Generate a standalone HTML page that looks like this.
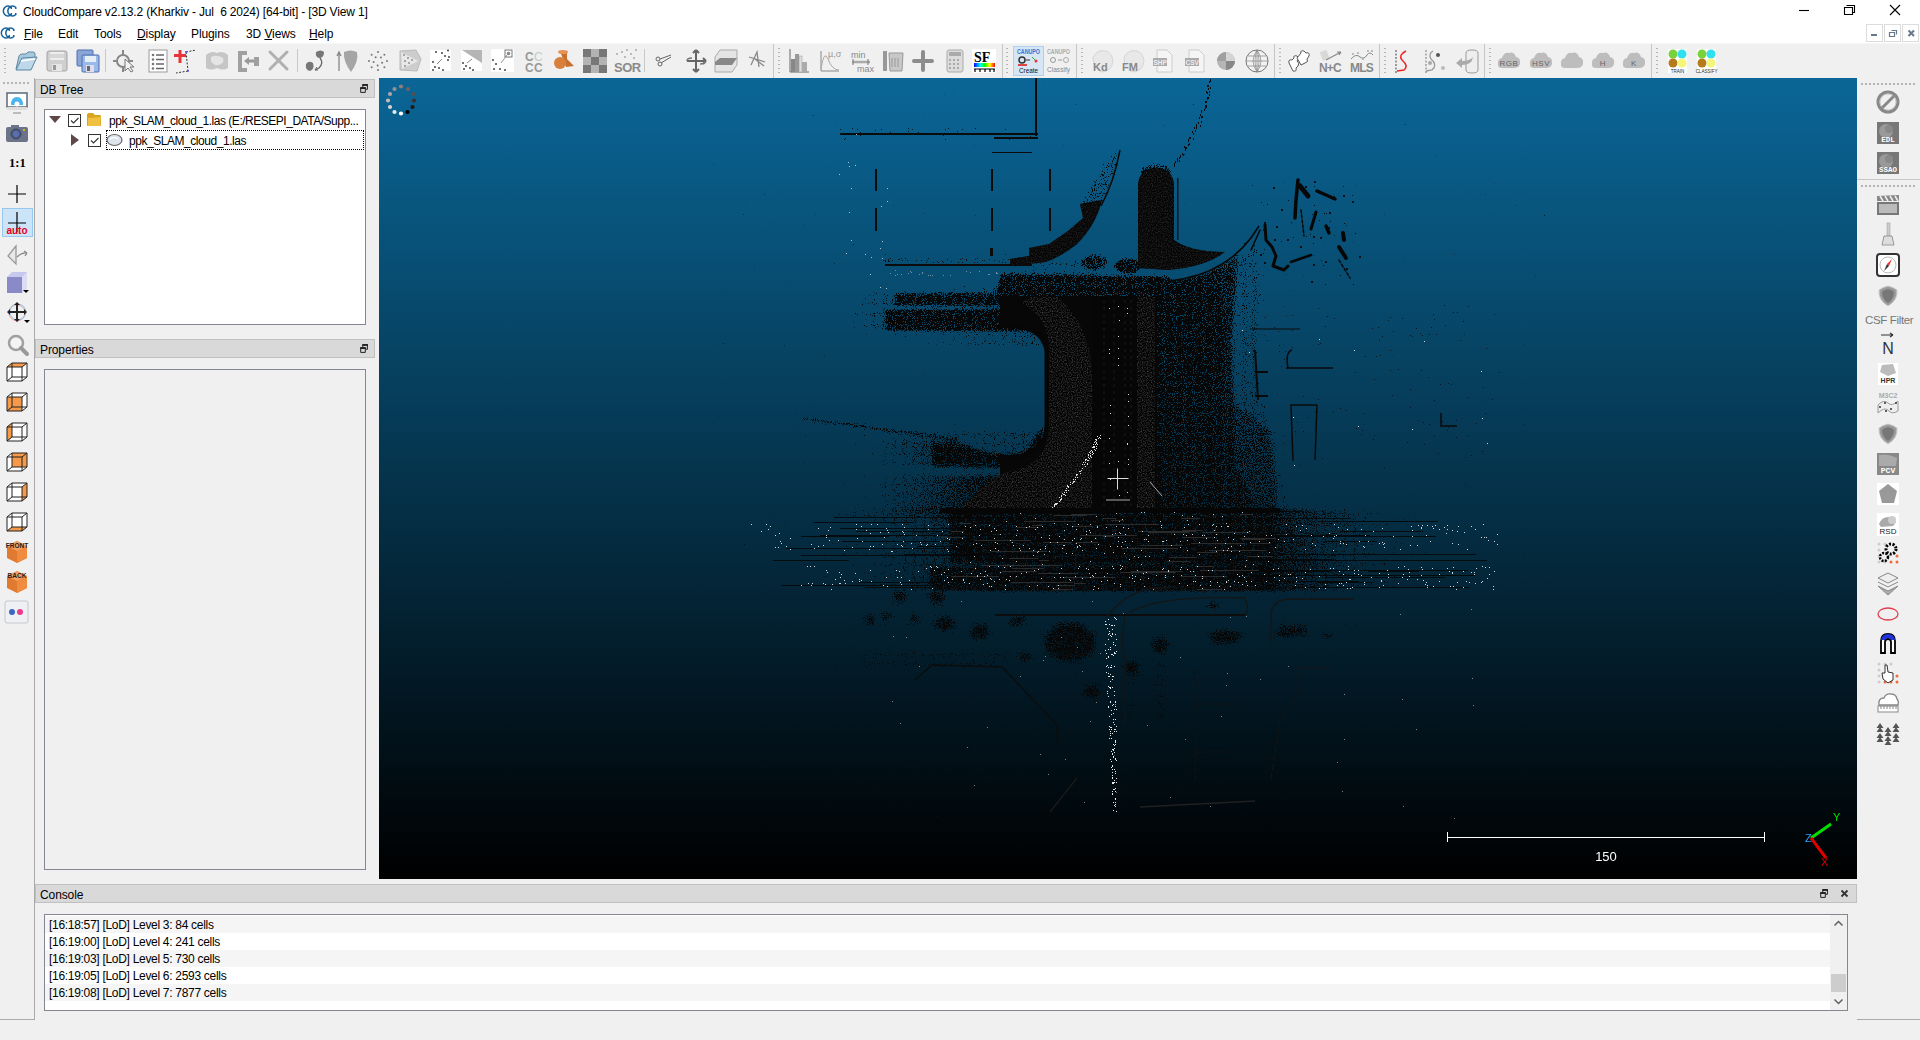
<!DOCTYPE html>
<html><head><meta charset="utf-8">
<style>
*{box-sizing:border-box;margin:0;padding:0}
html,body{width:1920px;height:1040px;overflow:hidden;background:#f0f0f0;font-family:"Liberation Sans",sans-serif;font-size:12px;color:#000}
.a{position:absolute}
.t{white-space:nowrap;line-height:14px}
svg{overflow:visible}
</style></head><body>
<div class="a" style="left:0;top:0;width:1920px;height:43px;background:#fff"></div>
<svg class="a" style="left:3px;top:5px" width="16" height="13" viewBox="0 0 16 13"><path d="M8.3,2.6 A4.6,5 0 1 0 8.3,9.4 M12.8,2.6 A4.6,5 0 1 0 12.8,9.4 M8.3,2.2v1.8 M12.8,2.2v1.8 M8.3,8v1.8 M12.8,8v1.8" fill="none" stroke="#14609a" stroke-width="1.5"/></svg>
<div class="a t" style="left:23px;top:5px;font-size:12px;color:#000;letter-spacing:-0.17px">CloudCompare v2.13.2 (Kharkiv - Jul&nbsp; 6 2024) [64-bit] - [3D View 1]</div>
<svg class="a" style="left:1794px;top:0px" width="20" height="20" viewBox="0 0 20 20"><path d="M5 10.5h10" stroke="#000" stroke-width="1.1"/></svg>
<svg class="a" style="left:1839px;top:0px" width="20" height="20" viewBox="0 0 20 20"><path d="M5.5 7.5h8v7h-8z" fill="none" stroke="#000" stroke-width="1.1"/><path d="M7.5 5.5h8v7h-2" fill="none" stroke="#000" stroke-width="1.1"/></svg>
<svg class="a" style="left:1885px;top:0px" width="20" height="20" viewBox="0 0 20 20"><path d="M5 5l10 10M15 5L5 15" stroke="#000" stroke-width="1.1"/></svg>
<svg class="a" style="left:1px;top:27px" width="16" height="13" viewBox="0 0 16 13"><path d="M8.3,2.6 A4.6,5 0 1 0 8.3,9.4 M12.8,2.6 A4.6,5 0 1 0 12.8,9.4 M8.3,2.2v1.8 M12.8,2.2v1.8 M8.3,8v1.8 M12.8,8v1.8" fill="none" stroke="#14609a" stroke-width="1.5"/></svg>
<div class="a t" style="left:24px;top:27px;font-size:12px;color:#000;letter-spacing:-0.1px"><u>F</u>ile</div>
<div class="a t" style="left:58px;top:27px;font-size:12px;color:#000;letter-spacing:-0.1px">Edit</div>
<div class="a t" style="left:94px;top:27px;font-size:12px;color:#000;letter-spacing:-0.1px">Tools</div>
<div class="a t" style="left:137px;top:27px;font-size:12px;color:#000;letter-spacing:-0.1px"><u>D</u>isplay</div>
<div class="a t" style="left:191px;top:27px;font-size:12px;color:#000;letter-spacing:-0.1px">Plugins</div>
<div class="a t" style="left:246px;top:27px;font-size:12px;color:#000;letter-spacing:-0.1px">3D <u>V</u>iews</div>
<div class="a t" style="left:309px;top:27px;font-size:12px;color:#000;letter-spacing:-0.1px"><u>H</u>elp</div>
<div class="a" style="left:1866px;top:24px;width:17px;height:18px;border:1px solid #dcdcdc;background:#fff"></div>
<div class="a" style="left:1884px;top:24px;width:17px;height:18px;border:1px solid #dcdcdc;background:#fff"></div>
<div class="a" style="left:1902px;top:24px;width:17px;height:18px;border:1px solid #dcdcdc;background:#fff"></div>
<svg class="a" style="left:1866px;top:24px" width="17" height="18" viewBox="0 0 17 18"><rect x="5" y="10" width="6" height="2" fill="#67788a"/></svg>
<svg class="a" style="left:1884px;top:24px" width="17" height="18" viewBox="0 0 17 18"><path d="M5.5 8.5h5v4h-5z M7.5 6.5h5v4" fill="none" stroke="#67788a" stroke-width="1.2"/></svg>
<svg class="a" style="left:1903px;top:24px" width="17" height="18" viewBox="0 0 17 18"><path d="M5.5 6.5l5.5 5.5M11 6.5l-5.5 5.5" stroke="#67788a" stroke-width="2"/></svg>
<div class="a" style="left:0;top:43px;width:1920px;height:1px;background:#f6f6f6"></div>
<div class="a" style="left:4px;top:48px;width:2px;height:25px;background:repeating-linear-gradient(to bottom,#b4b4b4 0 1px,transparent 1px 4px)"></div>
<div class="a" style="left:778px;top:48px;width:2px;height:25px;background:repeating-linear-gradient(to bottom,#b4b4b4 0 1px,transparent 1px 4px)"></div>
<div class="a" style="left:1006px;top:48px;width:2px;height:25px;background:repeating-linear-gradient(to bottom,#b4b4b4 0 1px,transparent 1px 4px)"></div>
<div class="a" style="left:1081px;top:48px;width:2px;height:25px;background:repeating-linear-gradient(to bottom,#b4b4b4 0 1px,transparent 1px 4px)"></div>
<div class="a" style="left:1279px;top:48px;width:2px;height:25px;background:repeating-linear-gradient(to bottom,#b4b4b4 0 1px,transparent 1px 4px)"></div>
<div class="a" style="left:1384px;top:48px;width:2px;height:25px;background:repeating-linear-gradient(to bottom,#b4b4b4 0 1px,transparent 1px 4px)"></div>
<div class="a" style="left:1489px;top:48px;width:2px;height:25px;background:repeating-linear-gradient(to bottom,#b4b4b4 0 1px,transparent 1px 4px)"></div>
<div class="a" style="left:1656px;top:48px;width:2px;height:25px;background:repeating-linear-gradient(to bottom,#b4b4b4 0 1px,transparent 1px 4px)"></div>
<div class="a" style="left:105px;top:49px;width:1px;height:23px;background:#c8c8c8"></div>
<div class="a" style="left:297px;top:49px;width:1px;height:23px;background:#c8c8c8"></div>
<div class="a" style="left:644px;top:49px;width:1px;height:23px;background:#c8c8c8"></div>
<div class="a" style="left:773px;top:44px;width:1px;height:34px;background:#c6c6c6"></div>
<div class="a" style="left:1002px;top:44px;width:1px;height:34px;background:#c6c6c6"></div>
<div class="a" style="left:1076px;top:44px;width:1px;height:34px;background:#c6c6c6"></div>
<div class="a" style="left:1274px;top:44px;width:1px;height:34px;background:#c6c6c6"></div>
<div class="a" style="left:1379px;top:44px;width:1px;height:34px;background:#c6c6c6"></div>
<div class="a" style="left:1484px;top:44px;width:1px;height:34px;background:#c6c6c6"></div>
<div class="a" style="left:1651px;top:44px;width:1px;height:34px;background:#c6c6c6"></div>
<div class="a" style="left:1013px;top:46px;width:31px;height:30px;background:#d6e6f4;border:1px solid #aed0ee"></div>
<svg class="a" style="left:13px;top:49px" width="24" height="24" viewBox="0 0 24 24"><path d="M3 20 L6 7 Q7 5 9 5 L13 5 15 3 20 3 Q22 3 22 5 L22 8 Z" fill="#a8c8dc" stroke="#5f8aa5"/><path d="M3 21 L9 9 L24 8 L18 21 Z" fill="#bcd8ea" stroke="#5a85a0"/><path d="M8 12 L22 10" stroke="#fff" stroke-width="1.5"/></svg>
<svg class="a" style="left:45px;top:49px" width="24" height="24" viewBox="0 0 24 24"><rect x="2" y="2" width="20" height="20" rx="2" fill="#cfcfcf" stroke="#a3a3a3"/><rect x="5" y="3" width="14" height="8" fill="#ededed"/><path d="M5 6h14M5 8h14" stroke="#c0c0c0"/><rect x="7" y="15" width="10" height="7" fill="#e6e6e6"/><rect x="8" y="16" width="3" height="5" fill="#999"/></svg>
<svg class="a" style="left:76px;top:49px" width="24" height="24" viewBox="0 0 24 24"><rect x="1" y="1" width="16" height="16" rx="1" fill="#8ba6d6" stroke="#4d6fb3"/><rect x="6" y="6" width="17" height="17" rx="1" fill="#9ab8e8" stroke="#4a6db0"/><rect x="9" y="7" width="11" height="6" fill="#e5edf5"/><rect x="10" y="16" width="8" height="7" fill="#dde"/><rect x="11" y="17" width="3" height="5" fill="#666"/></svg>
<svg class="a" style="left:112px;top:49px" width="24" height="24" viewBox="0 0 24 24"><circle cx="11" cy="12" r="6" fill="none" stroke="#888" stroke-width="2"/><path d="M1 12h4M17 12h4M11 1v5M11 18v5" stroke="#888" stroke-width="2"/><path d="M13 10 L13 22 L16 19 L19 23 L21 22 L18 18 L22 18 Z" fill="#f2f2f2" stroke="#777"/></svg>
<svg class="a" style="left:146px;top:49px" width="24" height="24" viewBox="0 0 24 24"><rect x="3" y="1" width="18" height="22" fill="#fff" stroke="#999"/><g fill="#777"><circle cx="7" cy="6" r="1.3"/><circle cx="7" cy="10.5" r="1.3"/><circle cx="7" cy="15" r="1.3"/><circle cx="7" cy="19.5" r="1.3"/></g><path d="M10 6h8M10 10.5h8M10 15h8M10 19.5h8" stroke="#666" stroke-width="1.3"/></svg>
<svg class="a" style="left:174px;top:49px" width="24" height="24" viewBox="0 0 24 24"><path d="M6 1v13M0 6.5h12" stroke="#e8333a" stroke-width="3"/><path d="M12 3 L22 1 M12 3 L14 22 M14 22 L2 24" stroke="#333" stroke-width="1" stroke-dasharray="2 1.5"/><circle cx="12" cy="3" r="1" fill="#55f"/><circle cx="14" cy="22" r="1" fill="#55f"/></svg>
<svg class="a" style="left:205px;top:49px" width="24" height="24" viewBox="0 0 24 24"><path d="M1 6 Q6 1 12 4 Q18 1 23 6 L23 19 Q18 22 12 19 Q6 22 1 19Z" fill="#c6c6c6"/><path d="M6 8 Q12 5 18 9 Q20 14 14 16 Q8 17 6 12Z" fill="#e5e5e5"/></svg>
<svg class="a" style="left:237px;top:49px" width="24" height="24" viewBox="0 0 24 24"><path d="M1 2h9v4H5v13h5v4H1z" fill="#a0a0a0"/><path d="M7 12 L12 8 L12 10.5 L17 10.5 L17 13.5 L12 13.5 L12 16Z" fill="#999"/><rect x="17" y="8" width="5" height="9" fill="#a0a0a0"/></svg>
<svg class="a" style="left:267px;top:49px" width="24" height="24" viewBox="0 0 24 24"><path d="M3 3 L20 20 M20 3 L3 20" stroke="#b0b0b0" stroke-width="3" stroke-linecap="round"/></svg>
<svg class="a" style="left:304px;top:49px" width="24" height="24" viewBox="0 0 24 24"><path d="M2 15 Q5 11 9 14 Q11 20 6 22 Q1 21 2 15Z" fill="#777"/><path d="M12 3 Q17 0 20 3 Q20 9 15 9 Q11 8 12 3Z" fill="#777"/><path d="M16 9 Q20 14 15 19 L11 21" fill="none" stroke="#666" stroke-width="1.3"/><path d="M11 21 L13 18 M11 21 L14 21" stroke="#666"/></svg>
<svg class="a" style="left:336px;top:49px" width="24" height="24" viewBox="0 0 24 24"><path d="M3 22V4M1 7L3 3L5 7" stroke="#888" stroke-width="1.3" fill="none"/><path d="M8 3 Q14 0 21 3 Q23 12 15 23 Q7 12 8 3Z" fill="#a5a5a5"/></svg>
<svg class="a" style="left:366px;top:49px" width="24" height="24" viewBox="0 0 24 24"><g fill="#777"><circle cx="21.0" cy="12.0" r="1"/><circle cx="18.364108439930344" cy="18.363813618012973" r="1"/><circle cx="12.000416941153919" cy="20.999999990342225" r="1"/><circle cx="5.636481217562238" cy="18.364403248189245" r="1"/><circle cx="3.0000000386310948" cy="12.000833882306944" r="1"/><circle cx="5.6353019572109595" cy="5.636776066794651" r="1"/><circle cx="11.998749176541818" cy="3.000000086919963" r="1"/><circle cx="18.362929070316362" cy="5.635007176270896" r="1"/><circle cx="16.144774473012983" cy="13.752382540388927" r="1"/><circle cx="11.61435707858034" cy="16.483445052318466" r="1"/><circle cx="7.616857908279282" cy="13.01885494737285" r="1"/><circle cx="9.676403143298202" cy="8.146313758552012" r="1"/><circle cx="14.946916457058906" cy="8.599164309303465" r="1"/></g></svg>
<svg class="a" style="left:399px;top:49px" width="24" height="24" viewBox="0 0 24 24"><path d="M1 2 L17 1 L22 10 L18 22 L1 21Z" fill="#cdcdcd" stroke="#bbb"/><path d="M2 3 L19 12 L3 20Z" fill="#e8e8e8"/><g fill="#555"><circle cx="5" cy="6" r="0.8"/><circle cx="9" cy="9" r="0.8"/><circle cx="13" cy="11" r="0.8"/><circle cx="6" cy="12" r="0.8"/><circle cx="10" cy="14" r="0.8"/><circle cx="6" cy="17" r="0.8"/></g></svg>
<svg class="a" style="left:430px;top:49px" width="24" height="24" viewBox="0 0 24 24"><rect x="0" y="1" width="21" height="21" fill="#fff"/><g fill="#444"><circle cx="6" cy="3" r="1"/><circle cx="12" cy="4" r="1"/><circle cx="18" cy="1.5" r="1"/><circle cx="15" cy="7" r="1"/><circle cx="19" cy="8" r="1"/><circle cx="3" cy="13" r="1"/><circle cx="5" cy="18" r="1"/><circle cx="9" cy="19" r="1"/><circle cx="3" cy="21" r="1"/><circle cx="13" cy="21" r="1"/><circle cx="18" cy="11" r="1"/></g><path d="M7 15L12 10" stroke="#888"/></svg>
<svg class="a" style="left:461px;top:49px" width="24" height="24" viewBox="0 0 24 24"><rect x="0" y="1" width="21" height="21" fill="#fff"/><path d="M1 1 L21 1 L21 14Z" fill="#b5b5b5"/><g fill="#444"><circle cx="2" cy="14" r="1"/><circle cx="5" cy="17" r="1"/><circle cx="9" cy="19" r="1"/><circle cx="3" cy="20" r="1"/><circle cx="12" cy="21" r="1"/></g><path d="M6 14L11 10" stroke="#888"/></svg>
<svg class="a" style="left:491px;top:49px" width="24" height="24" viewBox="0 0 24 24"><rect x="0" y="0" width="23" height="23" fill="#fff"/><g fill="#444"><circle cx="2" cy="11" r="1"/><circle cx="5" cy="15" r="1"/><circle cx="3" cy="20" r="1"/><circle cx="9" cy="20" r="1"/><circle cx="14" cy="21" r="1"/></g><path d="M10 14L16 6" stroke="#999"/><rect x="14" y="1" width="7" height="7" fill="none" stroke="#777"/><circle cx="17.5" cy="4.5" r="1.8" fill="#888"/></svg>
<svg class="a" style="left:525px;top:50px" width="24" height="24" viewBox="0 0 24 24"><text x="0" y="11" font-family="Liberation Sans" font-weight="bold" font-size="12" fill="#999">C</text><text x="9" y="11" font-family="Liberation Sans" font-size="12" fill="#c8c8c8">C</text><text x="0" y="22" font-family="Liberation Sans" font-weight="bold" font-size="12" fill="#999">C</text><text x="9" y="22" font-family="Liberation Sans" font-weight="bold" font-size="12" fill="#999">C</text></svg>
<svg class="a" style="left:552px;top:49px" width="24" height="24" viewBox="0 0 24 24"><path d="M8 2 Q14 1 15 4 L15 10 L22 17 L14 18 Z" fill="#c96f2e"/><circle cx="8" cy="14" r="6" fill="#d97f3c"/><ellipse cx="11" cy="3" rx="5" ry="2" fill="#e89155"/></svg>
<svg class="a" style="left:583px;top:49px" width="24" height="24" viewBox="0 0 24 24"><rect x="0" y="0" width="24" height="24" fill="#b3b3b3"/><g fill="#777"><rect x="0" y="0" width="8" height="8"/><rect x="16" y="0" width="8" height="8"/><rect x="8" y="8" width="8" height="8"/><rect x="0" y="16" width="8" height="8"/><rect x="16" y="16" width="8" height="8"/></g></svg>
<svg class="a" style="left:614px;top:49px" width="24" height="24" viewBox="0 0 24 24"><text x="0" y="23" font-family="Liberation Sans" font-weight="bold" font-size="13" fill="#8a8a8a" letter-spacing="-0.5">SOR</text><g fill="#aaa"><circle cx="3" cy="5" r="1"/><circle cx="8" cy="3" r="1"/><circle cx="13" cy="1" r="1"/><circle cx="17" cy="5" r="1"/><circle cx="22" cy="1" r="1"/><circle cx="11" cy="8" r="1"/><circle cx="20" cy="9" r="1"/></g></svg>
<svg class="a" style="left:655px;top:49px" width="24" height="24" viewBox="0 0 24 24"><circle cx="3" cy="10" r="2" fill="none" stroke="#666"/><circle cx="5" cy="15" r="2" fill="none" stroke="#666"/><path d="M5 10 L16 6 M6 14 L16 8" stroke="#666"/></svg>
<svg class="a" style="left:684px;top:49px" width="24" height="24" viewBox="0 0 24 24"><path d="M12 1v22M3 12h19M12 1l-3 3M12 1l3 3M12 23l-3-3M12 23l3-3M22 12l-3-3M22 12l-3 3" stroke="#666" stroke-width="2" fill="none"/><path d="M3 12 Q3 9 8 9M16 15 Q21 15 21 12" stroke="#777" fill="none" stroke-width="1.5"/></svg>
<svg class="a" style="left:714px;top:49px" width="24" height="24" viewBox="0 0 24 24"><path d="M1 8 L6 1 L23 1 L23 16 L18 23 L1 23Z" fill="#e4e4e4" stroke="#aaa"/><path d="M1 13 L6 9 L23 9 L18 16 L1 16Z" fill="#888"/></svg>
<svg class="a" style="left:747px;top:49px" width="24" height="24" viewBox="0 0 24 24"><path d="M4 16 L10 3 L12 18 M2 8 L18 13 M8 10 L17 17" stroke="#888" stroke-width="1.3" fill="none"/></svg>
<svg class="a" style="left:789px;top:49px" width="24" height="24" viewBox="0 0 24 24"><path d="M1 0 V23 H20" stroke="#666" fill="none"/><rect x="2" y="10" width="4" height="13" fill="#888"/><rect x="6" y="5" width="4" height="18" fill="#999"/><rect x="10" y="7" width="3" height="16" fill="#ddd" stroke="#999" stroke-width="0.5"/><rect x="13" y="13" width="5" height="10" fill="#aaa"/></svg>
<svg class="a" style="left:820px;top:49px" width="24" height="24" viewBox="0 0 24 24"><path d="M1 2 V22 H19" stroke="#888" fill="none"/><path d="M1 20 Q4 0 8 10 Q12 21 19 21" stroke="#aaa" fill="none"/><text x="8" y="8" font-family="Liberation Sans" font-size="9" fill="#999">µ,σ</text></svg>
<svg class="a" style="left:851px;top:49px" width="24" height="24" viewBox="0 0 24 24"><text x="0" y="9" font-family="Liberation Sans" font-size="9" fill="#888">min</text><text x="6" y="23" font-family="Liberation Sans" font-size="9" fill="#888">max</text><path d="M1 13h18" stroke="#aaa" stroke-width="2.5"/><path d="M2 10v6M17 10v6" stroke="#777"/></svg>
<svg class="a" style="left:883px;top:49px" width="24" height="24" viewBox="0 0 24 24"><rect x="0" y="2" width="4" height="20" fill="#999"/><path d="M6 4h14l-1 18h-12z" fill="#c8c8c8" stroke="#999"/><path d="M9 9v9M12 9v9M15 9v9" stroke="#999"/></svg>
<svg class="a" style="left:911px;top:49px" width="24" height="24" viewBox="0 0 24 24"><path d="M12 3v18M3 12h18" stroke="#8d8d8d" stroke-width="4" stroke-linecap="round"/></svg>
<svg class="a" style="left:944px;top:49px" width="24" height="24" viewBox="0 0 24 24"><rect x="3" y="1" width="16" height="22" rx="2" fill="#dcdcdc" stroke="#aaa"/><rect x="5" y="3" width="12" height="4" fill="#aaa"/><g fill="#aaa"><rect x="5" y="10" width="2" height="2"/><rect x="5" y="14" width="2" height="2"/><rect x="5" y="18" width="2" height="2"/><rect x="9" y="10" width="2" height="2"/><rect x="9" y="14" width="2" height="2"/><rect x="9" y="18" width="2" height="2"/><rect x="13" y="10" width="2" height="2"/><rect x="13" y="14" width="2" height="2"/><rect x="13" y="18" width="2" height="2"/></g></svg>
<svg class="a" style="left:972px;top:49px" width="24" height="24" viewBox="0 0 24 24"><rect x="0" y="0" width="24" height="24" fill="#fff"/><text x="2" y="13" font-family="Liberation Serif" font-weight="bold" font-size="14" fill="#000">SF</text><defs><linearGradient id="rb"><stop offset="0" stop-color="#00f"/><stop offset=".3" stop-color="#0ff"/><stop offset=".5" stop-color="#0f0"/><stop offset=".75" stop-color="#ff0"/><stop offset="1" stop-color="#f00"/></linearGradient></defs><rect x="2" y="14" width="21" height="4" fill="url(#rb)"/><path d="M2 20h21M3 20v3M8 20v3M13 20v3M18 20v3M22 20v3" stroke="#000" stroke-width="1.2"/></svg>
<svg class="a" style="left:1013px;top:47px" width="30" height="28" viewBox="0 0 30 28"><text x="4" y="7" font-family="Liberation Sans" font-weight="bold" font-size="6.5" fill="#3e6fd0" textLength="23" lengthAdjust="spacingAndGlyphs">CANUPO</text><circle cx="9" cy="13" r="3" fill="none" stroke="#333" stroke-width="1.5"/><path d="M13 13h4" stroke="#333"/><path d="M19 10l4 4" stroke="#3a3"/><circle cx="23" cy="14" r="1.5" fill="#e33"/><rect x="5" y="17" width="9" height="2" fill="#d44"/><text x="6" y="26" font-family="Liberation Sans" font-size="8" fill="#111" textLength="19" lengthAdjust="spacingAndGlyphs">Create</text></svg>
<svg class="a" style="left:1046px;top:47px" width="30" height="28" viewBox="0 0 30 28"><text x="1" y="7" font-family="Liberation Sans" font-weight="bold" font-size="6.5" fill="#aaa" textLength="23" lengthAdjust="spacingAndGlyphs">CANUPO</text><circle cx="7" cy="13" r="2.5" fill="none" stroke="#999"/><path d="M12 13h4" stroke="#999"/><circle cx="20" cy="13" r="2.5" fill="none" stroke="#aaa"/><text x="1" y="25" font-family="Liberation Sans" font-size="8" fill="#888" textLength="23" lengthAdjust="spacingAndGlyphs">Classify</text></svg>
<svg class="a" style="left:1090px;top:49px" width="24" height="24" viewBox="0 0 24 24"><path d="M3 8 Q8 0 16 2 Q22 4 23 12 Q22 22 12 23 Q3 20 3 8Z" fill="#e8e8e8" stroke="#d5d5d5"/><text x="3" y="22" font-family="Liberation Sans" font-weight="bold" font-size="11" fill="#888">Kd</text></svg>
<svg class="a" style="left:1121px;top:49px" width="24" height="24" viewBox="0 0 24 24"><path d="M3 8 Q8 0 16 2 Q22 4 23 12 Q22 22 12 23 Q3 20 3 8Z" fill="#e8e8e8" stroke="#d5d5d5"/><text x="1" y="22" font-family="Liberation Sans" font-weight="bold" font-size="11" fill="#888">FM</text></svg>
<svg class="a" style="left:1152px;top:49px" width="24" height="24" viewBox="0 0 24 24"><path d="M5 1h10l5 5v17H5z" fill="#f5f5f5" stroke="#ccc"/><rect x="1" y="9" width="14" height="8" fill="#aaa"/><text x="1.5" y="16" font-family="Liberation Sans" font-weight="bold" font-size="6.5" fill="#eee">SHP</text></svg>
<svg class="a" style="left:1184px;top:49px" width="24" height="24" viewBox="0 0 24 24"><path d="M5 1h10l5 5v17H5z" fill="#f5f5f5" stroke="#ccc"/><rect x="1" y="9" width="14" height="8" fill="#aaa"/><text x="1.5" y="16" font-family="Liberation Sans" font-weight="bold" font-size="6.5" fill="#eee">CSV</text></svg>
<svg class="a" style="left:1214px;top:49px" width="24" height="24" viewBox="0 0 24 24"><circle cx="12" cy="12" r="9" fill="#b5b5b5"/><path d="M12 12 L12 3 A9 9 0 0 1 21 12Z" fill="#d5d5d5"/><path d="M12 12 L21 12 A9 9 0 0 1 12 21Z" fill="#888"/><path d="M12 12 L3 12 A9 9 0 0 1 12 3Z" fill="#a0a0a0"/></svg>
<svg class="a" style="left:1245px;top:49px" width="24" height="24" viewBox="0 0 24 24"><circle cx="12" cy="12" r="11" fill="#f2f2f2" stroke="#777"/><path d="M12 1v22M1 12h22M3 7h18M3 17h18M12 1 Q4 12 12 23 M12 1 Q20 12 12 23 M12 1 Q8 12 12 23 M12 1 Q16 12 12 23" stroke="#888" fill="none" stroke-width="0.7"/></svg>
<svg class="a" style="left:1287px;top:49px" width="24" height="24" viewBox="0 0 24 24"><path d="M2 14 Q1 10 5 11 L7 9 Q6 6 10 7 L12 9 L10 12 Q13 14 11 17 L9 19 Q10 23 6 22 Z" fill="#fff" stroke="#555"/><path d="M10 9 L14 4 Q13 1 17 2 L19 4 Q23 3 22 7 L20 10 Q22 13 18 14 L14 16 Z" fill="#fff" stroke="#555"/></svg>
<svg class="a" style="left:1319px;top:49px" width="24" height="24" viewBox="0 0 24 24"><text x="0" y="23" font-family="Liberation Sans" font-weight="bold" font-size="12" fill="#888" letter-spacing="-0.8">N+C</text><rect x="2" y="2" width="7" height="9" fill="#d8d8d8" transform="rotate(-20 5 6)"/><path d="M7 11 L22 3 M22 3 L18 3 M22 3 L20 6" stroke="#888" stroke-width="1.2" fill="none"/></svg>
<svg class="a" style="left:1350px;top:49px" width="24" height="24" viewBox="0 0 24 24"><text x="0" y="23" font-family="Liberation Sans" font-weight="bold" font-size="12" fill="#888" letter-spacing="-0.8">MLS</text><path d="M1 10 Q6 4 10 8 Q14 11 17 6 Q20 2 23 6" stroke="#888" fill="none"/><g fill="#aaa"><circle cx="3" cy="5" r="1"/><circle cx="8" cy="4" r="1"/><circle cx="13" cy="10" r="1"/><circle cx="18" cy="2" r="1"/><circle cx="22" cy="2" r="1"/></g></svg>
<svg class="a" style="left:1394px;top:49px" width="24" height="24" viewBox="0 0 24 24"><path d="M2 1v23" stroke="#444" stroke-dasharray="2 1.5"/><path d="M12 2 Q4 6 8 11 Q15 17 10 21 L3 22" stroke="#e22" stroke-width="1.5" fill="none"/></svg>
<svg class="a" style="left:1425px;top:49px" width="24" height="24" viewBox="0 0 24 24"><path d="M1 1v23" stroke="#777" stroke-dasharray="2 1.5"/><path d="M8 2 Q3 5 6 10 Q13 16 7 21 L1 22" stroke="#999" stroke-width="1.3" fill="none"/><circle cx="13" cy="6" r="2" fill="#555"/><circle cx="5" cy="14" r="2" fill="#aaa"/><circle cx="18" cy="19" r="2" fill="#bbb"/></svg>
<svg class="a" style="left:1456px;top:49px" width="24" height="24" viewBox="0 0 24 24"><path d="M10 4 Q10 1 16 1 Q22 1 22 4 L22 21 Q22 24 16 24 Q10 24 10 21Z" fill="#eee" stroke="#999"/><path d="M0 14 L6 9 L6 12 Q14 12 17 8 Q16 16 6 16 L6 19Z" fill="#aaa"/></svg>
<svg class="a" style="left:1497px;top:49px" width="24" height="24" viewBox="0 0 24 24"><path d="M1 16 Q0 10 5 9 Q7 3 12 4 Q17 2 19 8 Q24 9 23 15 Q22 19 17 19 L5 19 Q1 19 1 16Z" fill="#bdbdbd"/><text x="12" y="17" text-anchor="middle" font-family="Liberation Sans" font-size="8" fill="#666" letter-spacing="0.5">RGB</text></svg>
<svg class="a" style="left:1529px;top:49px" width="24" height="24" viewBox="0 0 24 24"><path d="M1 16 Q0 10 5 9 Q7 3 12 4 Q17 2 19 8 Q24 9 23 15 Q22 19 17 19 L5 19 Q1 19 1 16Z" fill="#bdbdbd"/><text x="12" y="17" text-anchor="middle" font-family="Liberation Sans" font-size="8" fill="#666" letter-spacing="0.5">HSV</text></svg>
<svg class="a" style="left:1560px;top:49px" width="24" height="24" viewBox="0 0 24 24"><path d="M1 16 Q0 10 5 9 Q7 3 12 4 Q17 2 19 8 Q24 9 23 15 Q22 19 17 19 L5 19 Q1 19 1 16Z" fill="#bdbdbd"/><text x="12" y="17" text-anchor="middle" font-family="Liberation Sans" font-size="8" fill="#666" letter-spacing="0.5"></text></svg>
<svg class="a" style="left:1591px;top:49px" width="24" height="24" viewBox="0 0 24 24"><path d="M1 16 Q0 10 5 9 Q7 3 12 4 Q17 2 19 8 Q24 9 23 15 Q22 19 17 19 L5 19 Q1 19 1 16Z" fill="#bdbdbd"/><text x="12" y="17" text-anchor="middle" font-family="Liberation Sans" font-size="8" fill="#666" letter-spacing="0.5">H</text></svg>
<svg class="a" style="left:1622px;top:49px" width="24" height="24" viewBox="0 0 24 24"><path d="M1 16 Q0 10 5 9 Q7 3 12 4 Q17 2 19 8 Q24 9 23 15 Q22 19 17 19 L5 19 Q1 19 1 16Z" fill="#bdbdbd"/><text x="12" y="17" text-anchor="middle" font-family="Liberation Sans" font-size="8" fill="#666" letter-spacing="0.5">K</text></svg>
<svg class="a" style="left:1668px;top:49px" width="24" height="24" viewBox="0 0 24 24"><rect x="0" y="0" width="19" height="24" fill="#fff"/><circle cx="5" cy="5" r="4.5" fill="#7ad23a"/><circle cx="14" cy="5" r="4.5" fill="#2ee0f0"/><circle cx="5" cy="14" r="4.5" fill="#b47a1c"/><circle cx="14" cy="14" r="4.5" fill="#f5f57a"/><text x="9.5" y="23.5" text-anchor="middle" font-family="Liberation Sans" font-size="4.5" fill="#222">TRAIN</text></svg>
<svg class="a" style="left:1697px;top:49px" width="24" height="24" viewBox="0 0 24 24"><rect x="0" y="0" width="19" height="24" fill="#fff"/><circle cx="5" cy="5" r="4.5" fill="#7ad23a"/><circle cx="14" cy="5" r="4.5" fill="#2ee0f0"/><circle cx="5" cy="14" r="4.5" fill="#b47a1c"/><circle cx="14" cy="14" r="4.5" fill="#f5f57a"/><text x="9.5" y="23.5" text-anchor="middle" font-family="Liberation Sans" font-size="4.5" fill="#222">CLASSIFY</text></svg>
<div class="a" style="left:34px;top:78px;width:1px;height:942px;background:#a9a9a9"></div>
<div class="a" style="left:0px;top:1019px;width:35px;height:1px;background:#a9a9a9"></div>
<div class="a" style="left:3px;top:82px;width:28px;height:2px;background:repeating-linear-gradient(to right,#b4b4b4 0 2px,transparent 2px 4px)"></div>
<div class="a" style="left:2px;top:208px;width:31px;height:29px;background:#cce4f7;border:1px solid #99c8ee"></div>
<svg class="a" style="left:5px;top:209px" width="24" height="28" viewBox="0 0 24 28"><path d="M12 3v20M3 14h18" stroke="#000" stroke-width="1.2"/><text x="12" y="25" text-anchor="middle" font-family="Liberation Sans" font-weight="bold" font-size="10" fill="#e8001c">auto</text></svg>
<svg class="a" style="left:5px;top:92px" width="25" height="25" viewBox="0 0 25 25"><rect x="2" y="1" width="20" height="14" fill="#fff" stroke="#5a6a7a" stroke-width="1.5"/><path d="M6 13 Q6 5 12 5 Q18 5 18 13Z" fill="#4ab4ec"/><circle cx="12" cy="12" r="2.5" fill="#fff"/><rect x="2" y="15" width="20" height="3" fill="#ddd"/><path d="M8 21h8" stroke="#bbb" stroke-width="2"/></svg>
<svg class="a" style="left:5px;top:122px" width="25" height="25" viewBox="0 0 25 25"><rect x="1" y="5" width="22" height="15" rx="2" fill="#6a7388"/><rect x="6" y="3" width="8" height="4" fill="#6a7388"/><circle cx="11" cy="12" r="5" fill="#4d5a7a" stroke="#3a4560"/><circle cx="11" cy="12" r="3" fill="#5a6fb0"/><circle cx="19" cy="8" r="1" fill="#ec0"/></svg>
<svg class="a" style="left:5px;top:151px" width="25" height="25" viewBox="0 0 25 25"><text x="4" y="16" font-family="Liberation Serif" font-weight="bold" font-size="12.5" fill="#000">1:1</text></svg>
<svg class="a" style="left:5px;top:182px" width="25" height="25" viewBox="0 0 25 25"><path d="M12 3v18M3 12h18" stroke="#000" stroke-width="1.2"/></svg>
<svg class="a" style="left:5px;top:243px" width="25" height="25" viewBox="0 0 25 25"><path d="M11 3 L3 13 L11 21Z" fill="#e8e8e8" stroke="#999" stroke-width="1.3"/><path d="M12 14 Q17 9 22 10 M22 10 L19 8 M22 10 L20 13" stroke="#888" stroke-width="1.3" fill="none"/></svg>
<svg class="a" style="left:5px;top:271px" width="25" height="25" viewBox="0 0 25 25"><path d="M2 6 L7 1 L22 1 L22 17 L17 22 L2 22Z" fill="#c8c8ee"/><path d="M2 6 L17 6 L17 22 L2 22Z" fill="#8a8ac8"/><path d="M17 6 L22 1 L22 17 L17 22Z" fill="#dcdcf5"/><path d="M18 19h6l-3 3z" fill="#000"/></svg>
<svg class="a" style="left:6px;top:301px" width="25" height="25" viewBox="0 0 25 25"><circle cx="11" cy="11" r="8" fill="none" stroke="#9d9" stroke-width="0.8"/><circle cx="11" cy="12" r="8" fill="none" stroke="#f99" stroke-width="0.8"/><circle cx="12" cy="11" r="8" fill="none" stroke="#9bf" stroke-width="0.8"/><path d="M11 2v18M2 11h18" stroke="#222" stroke-width="2"/><path d="M11 1l-3 3h6zM11 21l-3-3h6zM1 11l3-3v6zM21 11l-3-3v6z" fill="#222"/><path d="M18 19h6l-3 3z" fill="#000"/></svg>
<svg class="a" style="left:6px;top:333px" width="25" height="25" viewBox="0 0 25 25"><circle cx="10" cy="10" r="7" fill="#f4f4f4" stroke="#a0a0a0" stroke-width="2.5"/><path d="M15 15 L21 21" stroke="#999" stroke-width="4" stroke-linecap="round"/></svg>
<svg class="a" style="left:5px;top:361px" width="25" height="25" viewBox="0 0 25 25"><path d="M2 6 L7 2 L22 2 L22 16 L17 20 L2 20Z" fill="#fff"/><path d="M2 6 L7 2 L22 2 L17 6Z" fill="#f59a4a"/><path d="M2 6 L7 2 L22 2 L22 16 L17 20 L2 20Z M2 6h15v14 M17 6 L22 2 M7 2v14h15 M7 16 L2 20" fill="none" stroke="#222" stroke-width="1"/></svg>
<svg class="a" style="left:5px;top:391px" width="25" height="25" viewBox="0 0 25 25"><path d="M2 6 L7 2 L22 2 L22 16 L17 20 L2 20Z" fill="#fff"/><path d="M2 6 L17 6 L17 20 L2 20Z" fill="#f59a4a"/><path d="M2 6 L7 2 L22 2 L22 16 L17 20 L2 20Z M2 6h15v14 M17 6 L22 2 M7 2v14h15 M7 16 L2 20" fill="none" stroke="#222" stroke-width="1"/></svg>
<svg class="a" style="left:5px;top:421px" width="25" height="25" viewBox="0 0 25 25"><path d="M2 6 L7 2 L22 2 L22 16 L17 20 L2 20Z" fill="#fff"/><path d="M2 6 L7 2 L7 16 L2 20Z" fill="#f59a4a"/><path d="M2 6 L7 2 L22 2 L22 16 L17 20 L2 20Z M2 6h15v14 M17 6 L22 2 M7 2v14h15 M7 16 L2 20" fill="none" stroke="#222" stroke-width="1"/></svg>
<svg class="a" style="left:5px;top:451px" width="25" height="25" viewBox="0 0 25 25"><path d="M2 6 L7 2 L22 2 L22 16 L17 20 L2 20Z" fill="#fff"/><path d="M7 2 L22 2 L22 16 L7 16Z" fill="#f59a4a"/><path d="M2 6 L7 2 L22 2 L22 16 L17 20 L2 20Z M2 6h15v14 M17 6 L22 2 M7 2v14h15 M7 16 L2 20" fill="none" stroke="#222" stroke-width="1"/></svg>
<svg class="a" style="left:5px;top:481px" width="25" height="25" viewBox="0 0 25 25"><path d="M2 6 L7 2 L22 2 L22 16 L17 20 L2 20Z" fill="#fff"/><path d="M17 6 L22 2 L22 16 L17 20Z" fill="#f59a4a"/><path d="M2 6 L7 2 L22 2 L22 16 L17 20 L2 20Z M2 6h15v14 M17 6 L22 2 M7 2v14h15 M7 16 L2 20" fill="none" stroke="#222" stroke-width="1"/></svg>
<svg class="a" style="left:5px;top:511px" width="25" height="25" viewBox="0 0 25 25"><path d="M2 6 L7 2 L22 2 L22 16 L17 20 L2 20Z" fill="#fff"/><path d="M2 20 L7 16 L22 16 L17 20Z" fill="#f59a4a"/><path d="M2 6 L7 2 L22 2 L22 16 L17 20 L2 20Z M2 6h15v14 M17 6 L22 2 M7 2v14h15 M7 16 L2 20" fill="none" stroke="#222" stroke-width="1"/></svg>
<svg class="a" style="left:5px;top:539px" width="25" height="25" viewBox="0 0 25 25"><path d="M12 2 L22 7 L22 19 L12 24 L2 19 L2 7Z" fill="#e07a30"/><path d="M12 12 L22 7 L22 19 L12 24Z" fill="#f08c40"/><path d="M2 7 L12 2 L22 7 L12 12Z" fill="#f5a060"/><text x="12" y="9" text-anchor="middle" font-family="Liberation Sans" font-weight="bold" font-size="6.5" fill="#222">FRONT</text></svg>
<svg class="a" style="left:5px;top:569px" width="25" height="25" viewBox="0 0 25 25"><path d="M12 2 L22 7 L22 19 L12 24 L2 19 L2 7Z" fill="#e07a30"/><path d="M12 12 L22 7 L22 19 L12 24Z" fill="#f08c40"/><path d="M2 7 L12 2 L22 7 L12 12Z" fill="#f5a060"/><text x="12" y="9" text-anchor="middle" font-family="Liberation Sans" font-weight="bold" font-size="6.5" fill="#222">BACK</text></svg>
<svg class="a" style="left:4px;top:600px" width="25" height="25" viewBox="0 0 25 25"><rect x="1" y="1" width="23" height="22" rx="2" fill="#eef0f4" stroke="#c4c8d0"/><circle cx="8" cy="12" r="3" fill="#3d66c0"/><circle cx="16" cy="12" r="3" fill="#e83c8c"/></svg>
<div class="a" style="left:1857px;top:1019px;width:63px;height:1px;background:#a9a9a9"></div>
<div class="a" style="left:1861px;top:83px;width:56px;height:2px;background:repeating-linear-gradient(to right,#b4b4b4 0 2px,transparent 2px 4px)"></div>
<div class="a" style="left:1861px;top:185px;width:56px;height:2px;background:repeating-linear-gradient(to right,#b4b4b4 0 2px,transparent 2px 4px)"></div>
<div class="a" style="left:1857px;top:179px;width:63px;height:1px;background:#c8c8c8"></div>
<svg class="a" style="left:1876px;top:90px" width="25" height="25" viewBox="0 0 25 25"><circle cx="12" cy="12" r="10" fill="none" stroke="#888" stroke-width="3"/><path d="M5 19 L19 5" stroke="#888" stroke-width="3"/><circle cx="12" cy="12" r="8" fill="none" stroke="#aaa" stroke-width="0.6"/></svg>
<svg class="a" style="left:1876px;top:121px" width="25" height="25" viewBox="0 0 25 25"><rect x="1" y="1" width="22" height="22" fill="#777"/><circle cx="10" cy="10" r="7" fill="#999"/><circle cx="13" cy="8" r="4" fill="#888"/><text x="12" y="21" text-anchor="middle" font-family="Liberation Mono" font-weight="bold" font-size="7.5" fill="#fff">EDL</text></svg>
<svg class="a" style="left:1876px;top:151px" width="25" height="25" viewBox="0 0 25 25"><rect x="1" y="1" width="22" height="22" fill="#777"/><circle cx="10" cy="10" r="7" fill="#999"/><circle cx="13" cy="8" r="4" fill="#888"/><text x="12" y="21" text-anchor="middle" font-family="Liberation Mono" font-weight="bold" font-size="7.5" fill="#fff">SSAO</text></svg>
<svg class="a" style="left:1876px;top:193px" width="25" height="25" viewBox="0 0 25 25"><rect x="1" y="9" width="22" height="13" fill="#777"/><rect x="3" y="11" width="18" height="9" fill="#bbb"/><path d="M1 3 L23 2 L23 8 L1 8Z" fill="#888"/><path d="M4 3 L7 8 M9 3 L12 8 M14 3 L17 8 M19 3 L22 8" stroke="#eee" stroke-width="1.5"/></svg>
<svg class="a" style="left:1876px;top:222px" width="25" height="25" viewBox="0 0 25 25"><rect x="11" y="1" width="3" height="13" fill="#ccc" stroke="#999" stroke-width="0.5"/><path d="M8 14 L16 14 L18 23 L6 23Z" fill="#ddd" stroke="#999"/></svg>
<svg class="a" style="left:1876px;top:253px" width="25" height="25" viewBox="0 0 25 25"><rect x="1" y="1" width="22" height="22" rx="3" fill="#fff" stroke="#333" stroke-width="2"/><circle cx="12" cy="12" r="8" fill="#fff" stroke="#bbb"/><path d="M16 6 L13 13 L11 11Z" fill="#e33"/><path d="M8 18 L11 11 L13 13Z" fill="#333"/></svg>
<svg class="a" style="left:1876px;top:284px" width="25" height="25" viewBox="0 0 25 25"><path d="M12 2 Q17 3 21 6 Q22 16 12 22 Q2 16 3 6 Q7 3 12 2Z" fill="#9a9a9a" stroke="#ccc"/><path d="M12 5 Q16 6 18 8 Q18 15 12 19 Q6 15 6 8 Q8 6 12 5Z" fill="#777"/></svg>
<svg class="a" style="left:1876px;top:331px" width="25" height="25" viewBox="0 0 25 25"><path d="M5 4h12M17 4l-3-2M17 4l-3 2" stroke="#333" stroke-width="1.2" fill="none"/><text x="12" y="23" text-anchor="middle" font-family="Liberation Sans" font-size="16" fill="#333">N</text></svg>
<svg class="a" style="left:1876px;top:362px" width="25" height="25" viewBox="0 0 25 25"><rect x="2" y="1" width="20" height="22" fill="#fff"/><path d="M6 3 L17 2 L20 11 L12 14 L4 10Z" fill="#bbb"/><text x="12" y="21" text-anchor="middle" font-family="Liberation Sans" font-weight="bold" font-size="7" fill="#333">HPR</text></svg>
<svg class="a" style="left:1876px;top:391px" width="25" height="25" viewBox="0 0 25 25"><text x="12" y="7" text-anchor="middle" font-family="Liberation Sans" font-weight="bold" font-size="7" fill="#aaa">M3C2</text><path d="M2 14 Q8 8 12 12 Q16 16 22 10 L22 20 Q16 24 12 19 Q8 16 2 22Z" fill="#eee" stroke="#999"/><g fill="#333"><circle cx="4" cy="16" r="1"/><circle cx="9" cy="12" r="1"/><circle cx="15" cy="18" r="1"/><circle cx="20" cy="12" r="1"/><circle cx="10" cy="20" r="1"/></g></svg>
<svg class="a" style="left:1876px;top:422px" width="25" height="25" viewBox="0 0 25 25"><path d="M12 2 Q17 3 21 6 Q22 16 12 22 Q2 16 3 6 Q7 3 12 2Z" fill="#9a9a9a" stroke="#ccc"/><path d="M12 5 Q16 6 18 8 Q18 15 12 19 Q6 15 6 8 Q8 6 12 5Z" fill="#777"/></svg>
<svg class="a" style="left:1876px;top:452px" width="25" height="25" viewBox="0 0 25 25"><rect x="1" y="1" width="22" height="22" fill="#888"/><path d="M3 3 Q12 1 21 6 L20 14 L3 14Z" fill="#aaa"/><text x="12" y="21" text-anchor="middle" font-family="Liberation Mono" font-weight="bold" font-size="8" fill="#fff">PCV</text></svg>
<svg class="a" style="left:1876px;top:482px" width="25" height="25" viewBox="0 0 25 25"><rect x="1" y="1" width="22" height="22" fill="#fff"/><path d="M12 2 L21 9 L18 21 L6 21 L3 9Z" fill="#999"/></svg>
<svg class="a" style="left:1876px;top:512px" width="25" height="25" viewBox="0 0 25 25"><rect x="1" y="1" width="22" height="23" fill="#fff"/><path d="M3 12 Q6 4 14 5 L20 10 L17 14 L5 15Z" fill="#aaa"/><circle cx="16" cy="8" r="4" fill="#ccc"/><text x="12" y="22" text-anchor="middle" font-family="Liberation Sans" font-size="8" fill="#222">RSD</text></svg>
<svg class="a" style="left:1876px;top:541px" width="25" height="25" viewBox="0 0 25 25"><g fill="#ccc"><circle cx="3" cy="3" r="1.5"/><circle cx="9" cy="3" r="1.5"/><circle cx="3" cy="9" r="1.5"/><circle cx="3" cy="15" r="1.5"/><circle cx="3" cy="21" r="1.5"/><circle cx="9" cy="21" r="1.5"/></g><g fill="#f06a3a"><circle cx="21" cy="15" r="1.5"/><circle cx="21" cy="21" r="1.5"/><circle cx="15" cy="21" r="1.5"/></g><circle cx="15" cy="8" r="5" fill="none" stroke="#000" stroke-width="3" stroke-dasharray="2 1.5"/><circle cx="8" cy="16" r="4" fill="none" stroke="#000" stroke-width="2.5" stroke-dasharray="2 1.3"/></svg>
<svg class="a" style="left:1876px;top:571px" width="25" height="25" viewBox="0 0 25 25"><path d="M12 2 L22 7 L12 12 L2 7Z" fill="#eee" stroke="#888"/><path d="M2 11 L12 16 L22 11" fill="none" stroke="#888"/><path d="M2 15 L12 20 L22 15 L12 24 Z" fill="#aaa" stroke="#888"/></svg>
<svg class="a" style="left:1876px;top:602px" width="25" height="25" viewBox="0 0 25 25"><ellipse cx="12" cy="12" rx="10" ry="6" fill="none" stroke="#e04050" stroke-width="1.3"/></svg>
<svg class="a" style="left:1876px;top:631px" width="25" height="25" viewBox="0 0 25 25"><path d="M5 22 L5 10 Q5 3 12 3 Q19 3 19 10 L19 22 L15 22 L15 11 Q15 8 12 8 Q9 8 9 11 L9 22Z" fill="#fff" stroke="#000" stroke-width="1.8"/><path d="M5 9 Q6 3 12 3 Q18 3 19 9 L15 9 Q14 7 12 7 Q10 7 9 9Z" fill="#2233dd"/></svg>
<svg class="a" style="left:1876px;top:661px" width="25" height="25" viewBox="0 0 25 25"><g fill="#ccc"><circle cx="3" cy="3" r="1.5"/><circle cx="9" cy="3" r="1.5"/><circle cx="15" cy="3" r="1.5"/><circle cx="3" cy="9" r="1.5"/><circle cx="3" cy="15" r="1.5"/><circle cx="3" cy="21" r="1.5"/></g><g fill="#f06a3a"><circle cx="15" cy="15" r="1.5"/><circle cx="21" cy="15" r="1.5"/><circle cx="21" cy="21" r="1.5"/><circle cx="15" cy="21" r="1.5"/><circle cx="9" cy="21" r="1.5"/></g><path d="M9 4 L11 4 L12 11 L17 12 L17 19 L12 22 L7 18 L6 12 L9 12Z" fill="#fff" stroke="#333"/></svg>
<svg class="a" style="left:1876px;top:691px" width="25" height="25" viewBox="0 0 25 25"><path d="M3 14 Q2 7 8 7 Q10 2 15 3 Q20 3 21 8 Q23 10 22 14Z" fill="#fff" stroke="#888" stroke-width="1.3"/><rect x="2" y="15" width="20" height="6" fill="#fff" stroke="#888"/><path d="M5 15v3M8 15v3M11 15v3M14 15v3M17 15v3M20 15v3" stroke="#888"/></svg>
<svg class="a" style="left:1876px;top:721px" width="25" height="25" viewBox="0 0 25 25"><g fill="#555"><path d="M4 2 l-3.5 5h7z M4 6 l-3.5 5h7z"/><path d="M20 2 l-3.5 5h7z M20 6 l-3.5 5h7z"/><path d="M12 6 l-3.5 5h7z M12 10 l-3.5 5h7z"/><path d="M4 12 l-3.5 5h7z M4 16 l-3.5 5h7z"/><path d="M20 12 l-3.5 5h7z M20 16 l-3.5 5h7z"/><path d="M12 15 l-3.5 5h7z M12 19 l-3.5 5h7z"/></g></svg>
<div class="a t" style="left:1865px;top:313px;font-size:11.5px;color:#777;letter-spacing:-0.35px">CSF Filter</div>
<div class="a" style="left:35px;top:79px;width:340px;height:19px;background:#d9d9d9;border:1px solid #c0c0c0"></div>
<div class="a t" style="left:40px;top:83px;font-size:12px;color:#000;letter-spacing:-0.1px">DB Tree</div>
<svg class="a" style="left:360px;top:83px" width="9" height="11" viewBox="0 0 9 11"><path d="M0.7 4.7h4.6v4.7h-4.6z" fill="none" stroke="#222" stroke-width="1"/><rect x="0.2" y="4.2" width="5.6" height="1.8" fill="#222"/><path d="M2.8 4V1.6h4.6v4.7H6" fill="none" stroke="#222"/><rect x="2.3" y="1.1" width="5.6" height="1.8" fill="#222"/></svg>
<div class="a" style="left:44px;top:109px;width:322px;height:216px;background:#fff;border:1px solid #828790"></div>
<svg class="a" style="left:48px;top:115px" width="14" height="10" viewBox="0 0 14 10"><path d="M1 1h12l-6 7z" fill="#5e4848"/></svg>
<div class="a" style="left:68px;top:114px;width:13px;height:13px;border:1px solid #333;background:#fff"></div>
<svg class="a" style="left:68px;top:114px" width="13" height="13" viewBox="0 0 13 13"><path d="M3 6.5l2.5 2.5 5-5" fill="none" stroke="#333" stroke-width="1.1"/></svg>
<svg class="a" style="left:86px;top:112px" width="17" height="16" viewBox="0 0 17 16"><path d="M1 3 Q1 1 3 1 L7 1 9 3 14 3 Q15 3 15 5 L15 13 Q15 14 14 14 L2 14 Q1 14 1 13Z" fill="#d9a420"/><path d="M2 6 L15 5 L14 14 L2 14Z" fill="#f0c040"/></svg>
<div class="a t" style="left:109px;top:114px;font-size:12px;color:#000;letter-spacing:-0.48px">ppk_SLAM_cloud_1.las (E:/RESEPI_DATA/Supp...</div>
<svg class="a" style="left:70px;top:134px" width="10" height="12" viewBox="0 0 10 12"><path d="M1 0v12l8-6z" fill="#5e4848"/></svg>
<div class="a" style="left:88px;top:134px;width:13px;height:13px;border:1px solid #333;background:#fff"></div>
<svg class="a" style="left:88px;top:134px" width="13" height="13" viewBox="0 0 13 13"><path d="M3 6.5l2.5 2.5 5-5" fill="none" stroke="#333" stroke-width="1.1"/></svg>
<div class="a" style="left:106px;top:130px;width:258px;height:20px;border:1px dotted #000"></div>
<svg class="a" style="left:106px;top:133px" width="17" height="14" viewBox="0 0 17 14"><ellipse cx="8.5" cy="7" rx="7.5" ry="5.5" fill="#dde4ee" stroke="#666" stroke-width="1.2"/><path d="M4 6 Q8 3 12 6" stroke="#fff" stroke-width="1.5" fill="none"/></svg>
<div class="a t" style="left:129px;top:134px;font-size:12px;color:#000;letter-spacing:-0.45px">ppk_SLAM_cloud_1.las</div>
<div class="a" style="left:35px;top:339px;width:340px;height:19px;background:#d9d9d9;border:1px solid #c0c0c0"></div>
<div class="a t" style="left:40px;top:343px;font-size:12px;color:#000;letter-spacing:-0.1px">Properties</div>
<svg class="a" style="left:360px;top:343px" width="9" height="11" viewBox="0 0 9 11"><path d="M0.7 4.7h4.6v4.7h-4.6z" fill="none" stroke="#222" stroke-width="1"/><rect x="0.2" y="4.2" width="5.6" height="1.8" fill="#222"/><path d="M2.8 4V1.6h4.6v4.7H6" fill="none" stroke="#222"/><rect x="2.3" y="1.1" width="5.6" height="1.8" fill="#222"/></svg>
<div class="a" style="left:44px;top:369px;width:322px;height:501px;background:#f0f0f0;border:1px solid #828790"></div>
<div class="a" style="left:35px;top:884px;width:1822px;height:19px;background:#d9d9d9;border:1px solid #c0c0c0"></div>
<div class="a t" style="left:40px;top:888px;font-size:12px;color:#000;letter-spacing:-0.1px">Console</div>
<svg class="a" style="left:1820px;top:888px" width="9" height="11" viewBox="0 0 9 11"><path d="M0.7 4.7h4.6v4.7h-4.6z" fill="none" stroke="#222" stroke-width="1"/><rect x="0.2" y="4.2" width="5.6" height="1.8" fill="#222"/><path d="M2.8 4V1.6h4.6v4.7H6" fill="none" stroke="#222"/><rect x="2.3" y="1.1" width="5.6" height="1.8" fill="#222"/></svg>
<svg class="a" style="left:1840px;top:887px" width="10" height="13" viewBox="0 0 10 13"><path d="M1.5 3.5l6 6M7.5 3.5l-6 6" stroke="#333" stroke-width="1.8"/></svg>
<div class="a" style="left:44px;top:914px;width:1804px;height:97px;background:#fff;border:1px solid #828790"></div>
<div class="a" style="left:45px;top:916px;width:1785px;height:17px;background:#f5f5f5"></div>
<div class="a t" style="left:49px;top:918px;font-size:12px;color:#000;letter-spacing:-0.3px">[16:18:57] [LoD] Level 3: 84 cells</div>
<div class="a t" style="left:49px;top:935px;font-size:12px;color:#000;letter-spacing:-0.3px">[16:19:00] [LoD] Level 4: 241 cells</div>
<div class="a" style="left:45px;top:950px;width:1785px;height:17px;background:#f5f5f5"></div>
<div class="a t" style="left:49px;top:952px;font-size:12px;color:#000;letter-spacing:-0.3px">[16:19:03] [LoD] Level 5: 730 cells</div>
<div class="a t" style="left:49px;top:969px;font-size:12px;color:#000;letter-spacing:-0.3px">[16:19:05] [LoD] Level 6: 2593 cells</div>
<div class="a" style="left:45px;top:984px;width:1785px;height:17px;background:#f5f5f5"></div>
<div class="a t" style="left:49px;top:986px;font-size:12px;color:#000;letter-spacing:-0.3px">[16:19:08] [LoD] Level 7: 7877 cells</div>
<div class="a" style="left:1830px;top:915px;width:17px;height:95px;background:#f0f0f0"></div>
<svg class="a" style="left:1830px;top:915px" width="17" height="17" viewBox="0 0 17 17"><path d="M4.5 10.5l4-4 4 4" fill="none" stroke="#606060" stroke-width="1.5"/></svg>
<svg class="a" style="left:1830px;top:993px" width="17" height="17" viewBox="0 0 17 17"><path d="M4.5 6.5l4 4 4-4" fill="none" stroke="#606060" stroke-width="1.5"/></svg>
<div class="a" style="left:1831px;top:974px;width:15px;height:18px;background:#cdcdcd"></div>

<div class="a" id="view" style="left:379px;top:78px;width:1478px;height:801px;background:linear-gradient(to bottom,#0a6697 0%,#000 100%);overflow:hidden">
<svg width="1478" height="801" viewBox="379 78 1478 801" style="position:absolute;left:0;top:0;overflow:hidden"><defs>
<filter id="den" x="700" y="78" width="850" height="801" filterUnits="userSpaceOnUse" color-interpolation-filters="sRGB">
 <feTurbulence type="fractalNoise" baseFrequency="0.9" numOctaves="1" seed="4" result="n"/>
 <feColorMatrix in="n" type="matrix" values="0 0 0 0 0  0 0 0 0 0  0 0 0 0 0  1 0 0 0 0" result="na"/>
 <feGaussianBlur in="SourceAlpha" stdDeviation="1.5" result="sa"/>
 <feComposite in="na" in2="sa" operator="arithmetic" k1="0" k2="20" k3="9" k4="-16.2" result="m"/>
 <feFlood flood-color="#070707"/><feComposite in2="m" operator="in"/></filter>
<filter id="den2" x="700" y="78" width="850" height="801" filterUnits="userSpaceOnUse" color-interpolation-filters="sRGB">
 <feTurbulence type="fractalNoise" baseFrequency="0.9" numOctaves="1" seed="11" result="n"/>
 <feColorMatrix in="n" type="matrix" values="0 0 0 0 0  0 0 0 0 0  0 0 0 0 0  1 0 0 0 0" result="na"/>
 <feGaussianBlur in="SourceAlpha" stdDeviation="3" result="sa"/>
 <feComposite in="na" in2="sa" operator="arithmetic" k1="0" k2="20" k3="9" k4="-16.2" result="m"/>
 <feFlood flood-color="#070707"/><feComposite in2="m" operator="in"/></filter>
<filter id="den3" x="700" y="78" width="850" height="801" filterUnits="userSpaceOnUse" color-interpolation-filters="sRGB">
 <feTurbulence type="fractalNoise" baseFrequency="0.9" numOctaves="1" seed="17" result="n"/>
 <feColorMatrix in="n" type="matrix" values="0 0 0 0 0  0 0 0 0 0  0 0 0 0 0  1 0 0 0 0" result="na"/>
 <feGaussianBlur in="SourceAlpha" stdDeviation="1" result="sa"/>
 <feComposite in="na" in2="sa" operator="arithmetic" k1="0" k2="20" k3="9" k4="-16.2" result="m"/>
 <feFlood flood-color="#070707"/><feComposite in2="m" operator="in"/></filter>
<filter id="gr" x="700" y="78" width="850" height="801" filterUnits="userSpaceOnUse" color-interpolation-filters="sRGB">
 <feTurbulence type="fractalNoise" baseFrequency="0.8" numOctaves="1" seed="21" result="n"/>
 <feColorMatrix in="n" type="matrix" values="0.6 0 0 0 -0.24  0.6 0 0 0 -0.24  0.6 0 0 0 -0.24  0 0 0 0 1" result="c"/>
 <feComposite in="c" in2="SourceGraphic" operator="in"/>
</filter>
<linearGradient id="gL"><stop offset="0" stop-opacity="0.15"/><stop offset="0.5" stop-opacity="0.7"/><stop offset="1" stop-opacity="1"/></linearGradient>
<linearGradient id="gL2"><stop offset="0" stop-opacity="0.05"/><stop offset="0.6" stop-opacity="0.6"/><stop offset="1" stop-opacity="1"/></linearGradient>
<linearGradient id="gR"><stop offset="0" stop-opacity="1"/><stop offset="0.6" stop-opacity="0.92"/><stop offset="1" stop-opacity="0.4"/></linearGradient>
<linearGradient id="gBand"><stop offset="0" stop-opacity="0"/><stop offset="0.15" stop-opacity="0.25"/><stop offset="0.35" stop-opacity="0.9"/><stop offset="0.7" stop-opacity="0.9"/><stop offset="0.85" stop-opacity="0.3"/><stop offset="1" stop-opacity="0"/></linearGradient>
</defs>
<g fill="#0b0b0b">
<rect x="840" y="133" width="198" height="2"/>
<rect x="994" y="137" width="44" height="2"/>
<rect x="1035" y="78" width="2" height="58"/>
<rect x="992" y="152" width="40" height="1"/>
<rect x="875" y="169" width="2" height="22"/><rect x="875" y="208" width="2" height="23"/>
<rect x="991" y="169" width="2" height="22"/><rect x="991" y="208" width="2" height="23"/>
<rect x="1049" y="169" width="2" height="22"/><rect x="1049" y="208" width="2" height="23"/>
<rect x="990" y="248" width="3" height="8"/>
<rect x="885" y="264" width="147" height="2"/>
</g>
<path fill="#111" opacity="1" d="M928 258h1v1h-1zM977 258h1v1h-1zM960 259h1v1h-1zM888 260h1v1h-1zM885 260h1v1h-1zM890 258h1v1h-1zM943 262h1v1h-1zM898 259h1v1h-1zM974 262h1v1h-1zM966 259h1v1h-1zM1026 258h1v1h-1zM1008 259h1v1h-1zM901 258h1v1h-1zM926 262h1v1h-1zM907 260h1v1h-1zM975 259h1v1h-1zM962 258h1v1h-1zM888 259h1v1h-1zM982 260h1v1h-1zM927 260h1v1h-1zM947 259h1v1h-1zM999 261h1v1h-1zM916 260h1v1h-1zM958 262h1v1h-1zM989 259h1v1h-1zM1027 258h1v1h-1zM942 261h1v1h-1zM902 260h1v1h-1zM885 261h1v1h-1zM994 260h1v1h-1zM1011 259h1v1h-1zM984 260h1v1h-1zM966 260h1v1h-1zM1005 262h1v1h-1zM951 261h1v1h-1zM889 261h1v1h-1zM977 262h1v1h-1zM1003 259h1v1h-1zM937 261h1v1h-1zM883 260h1v1h-1zM905 258h1v1h-1zM888 261h1v1h-1zM899 259h1v1h-1zM938 262h1v1h-1zM892 260h1v1h-1zM962 262h1v1h-1zM1002 262h1v1h-1zM921 260h1v1h-1zM933 262h1v1h-1zM1023 258h1v1h-1z"/>
<path fill="#111" opacity="1" d="M875 130h1v1h-1zM886 133h1v1h-1zM957 131h1v1h-1zM840 133h1v1h-1zM913 134h1v1h-1zM1030 136h1v1h-1zM943 135h1v1h-1zM975 128h1v1h-1zM1019 137h1v1h-1zM1014 137h1v1h-1zM918 132h1v1h-1zM860 135h1v1h-1zM852 128h1v1h-1zM881 129h1v1h-1zM908 128h1v1h-1zM840 129h1v1h-1zM860 132h1v1h-1zM845 138h1v1h-1zM962 129h1v1h-1zM890 132h1v1h-1zM912 129h1v1h-1zM1009 139h1v1h-1zM933 133h1v1h-1zM857 129h1v1h-1zM908 131h1v1h-1zM1005 129h1v1h-1zM844 139h1v1h-1zM945 129h1v1h-1zM948 128h1v1h-1zM945 139h1v1h-1z"/>
<path fill="#ddd" opacity="0.8" d="M882 241h1v1h-1zM851 188h1v1h-1zM846 253h1v1h-1zM865 254h1v1h-1zM855 165h1v1h-1zM880 287h1v1h-1zM882 258h1v1h-1zM880 248h1v1h-1zM849 212h1v1h-1zM856 134h1v1h-1zM839 174h1v1h-1zM851 240h1v1h-1zM887 201h1v1h-1zM886 288h1v1h-1zM887 188h1v1h-1zM849 166h1v1h-1zM848 162h1v1h-1zM870 274h1v1h-1zM881 206h1v1h-1zM871 257h1v1h-1z"/>
<path fill="#aaa" opacity="0.7" d="M890 273h1v1h-1zM989 274h1v1h-1zM970 272h1v1h-1zM901 274h1v1h-1zM919 274h1v1h-1zM996 272h1v1h-1zM928 275h1v1h-1zM966 271h1v1h-1zM895 270h1v1h-1zM988 274h1v1h-1zM897 274h1v1h-1zM997 273h1v1h-1zM922 273h1v1h-1zM895 270h1v1h-1zM996 273h1v1h-1zM943 275h1v1h-1zM932 275h1v1h-1zM979 271h1v1h-1zM910 271h1v1h-1zM908 273h1v1h-1zM911 272h1v1h-1zM895 275h1v1h-1zM922 272h1v1h-1zM950 275h1v1h-1zM930 275h1v1h-1z"/>
<path fill="#0a0a0a" d="M1210 80h1v2h-1zM1210 79h1v2h-1zM1209 81h1v2h-1zM1207 85h1v2h-1zM1208 85h1v2h-1zM1210 87h1v2h-1zM1208 88h1v2h-1zM1209 91h1v2h-1zM1206 91h1v2h-1zM1207 92h1v2h-1zM1209 94h1v2h-1zM1207 97h1v2h-1zM1208 97h1v2h-1zM1207 98h1v2h-1zM1206 101h1v2h-1zM1205 101h1v2h-1zM1205 105h1v2h-1zM1206 106h1v2h-1zM1206 105h1v2h-1zM1204 109h1v2h-1zM1205 107h1v2h-1zM1201 110h1v2h-1zM1201 111h1v2h-1zM1200 114h1v2h-1zM1202 116h1v2h-1zM1199 117h1v2h-1zM1201 116h1v2h-1zM1201 121h1v2h-1zM1198 122h1v2h-1zM1198 122h1v2h-1zM1200 125h1v2h-1zM1196 124h1v2h-1zM1196 126h1v2h-1zM1194 127h1v2h-1zM1196 127h1v2h-1zM1195 130h1v2h-1zM1192 131h1v2h-1zM1193 133h1v2h-1zM1190 137h1v2h-1zM1193 138h1v2h-1zM1189 137h1v2h-1zM1188 140h1v2h-1zM1188 139h1v2h-1zM1188 144h1v2h-1zM1189 143h1v2h-1zM1185 147h1v2h-1zM1186 147h1v2h-1zM1184 146h1v2h-1zM1185 149h1v2h-1zM1182 153h1v2h-1zM1183 154h1v2h-1zM1180 155h1v2h-1zM1179 157h1v2h-1zM1180 156h1v2h-1zM1179 160h1v2h-1zM1177 158h1v2h-1zM1177 160h1v2h-1zM1175 161h1v2h-1zM1174 163h1v2h-1zM1174 165h1v2h-1z"/>
<rect x="1177" y="178" width="1.5" height="62" fill="#151515"/>
<g filter="url(#den)">
<rect x="855" y="293" width="189" height="13" fill="url(#gL)"/><rect x="895" y="293" width="149" height="13" opacity="0.9"/>
<rect x="850" y="309" width="194" height="22" fill="url(#gL)"/><rect x="885" y="309" width="159" height="22" opacity="0.95"/>
<rect x="840" y="286" width="204" height="60" fill="url(#gL2)" opacity="0.5"/>
<path d="M880,437 L963,443 Q995,458 1025,452 L1044,425 L1044,469 L880,465Z" fill="url(#gL)"/>
<path d="M932,441 L963,444 Q995,459 1025,453 L1044,425 L1044,469 L932,467Z" opacity="0.95"/>
<path d="M800,416 L960,438 L958,442 L800,420Z" opacity="0.8"/>
<rect x="880" y="476" width="164" height="36" fill="url(#gL)"/>
<rect x="820" y="430" width="224" height="90" fill="url(#gL2)" opacity="0.5"/>
<path d="M1000,274 L1170,276 L1180,297 L995,298Z"/>
<path d="M1010,262 L1100,258 L1100,276 L1000,276Z" opacity="0.35"/>
<path d="M1155,280 Q1210,282 1240,250 L1232,340 L1236,470 L1260,512 L1155,512Z" fill="url(#gR)"/>
<path d="M1180,284 Q1238,276 1258,236 L1262,300 L1255,380 L1272,430 L1280,470 L1290,512 L1200,512Z" opacity="0.35"/><path d="M1230,400 L1270,430 L1278,512 L1230,512Z" opacity="0.6"/>
<path d="M1155,283 L1215,285 L1228,330 L1222,370 L1205,395 L1180,380 L1155,380Z"/>
<path d="M1240,240 L1290,260 L1300,420 L1280,500 L1240,480Z" opacity="0.12"/>
<path d="M1120,153 Q1114,180 1102,204 L1080,206 Q1092,178 1114,153Z" opacity="0.55"/>
<ellipse cx="1095" cy="262" rx="14" ry="8" opacity="0.8"/>
<ellipse cx="1128" cy="266" rx="14" ry="8"/>
<rect x="760" y="508" width="720" height="84" fill="url(#gBand)"/>
<rect x="950" y="508" width="325" height="54"/>
<rect x="930" y="567" width="345" height="23" opacity="0.9"/>
<rect x="1200" y="562" width="120" height="5" opacity="0.3"/>
<ellipse cx="1156" cy="172" rx="16" ry="8" opacity="0.8"/>
</g>
<g filter="url(#den2)">
<ellipse cx="900" cy="596" rx="8" ry="7" opacity="0.95"/>
<ellipse cx="937" cy="597" rx="10" ry="8" opacity="0.95"/>
<ellipse cx="870" cy="620" rx="7" ry="6" opacity="0.95"/>
<ellipse cx="887" cy="617" rx="6" ry="5" opacity="0.95"/>
<ellipse cx="915" cy="619" rx="8" ry="5" opacity="0.95"/>
<ellipse cx="945" cy="624" rx="12" ry="8" opacity="0.95"/>
<ellipse cx="980" cy="632" rx="11" ry="9" opacity="0.95"/>
<ellipse cx="1017" cy="621" rx="10" ry="6" opacity="0.95"/>
<ellipse cx="1070" cy="642" rx="27" ry="21" opacity="0.95"/>
<ellipse cx="1132" cy="667" rx="9" ry="8" opacity="0.95"/>
<ellipse cx="1160" cy="645" rx="10" ry="9" opacity="0.95"/>
<ellipse cx="1225" cy="637" rx="18" ry="8" opacity="0.95"/>
<ellipse cx="1285" cy="632" rx="10" ry="7" opacity="0.95"/>
<ellipse cx="1092" cy="692" rx="10" ry="8" opacity="0.95"/>
<ellipse cx="1025" cy="657" rx="8" ry="6" opacity="0.95"/>
<ellipse cx="1300" cy="631" rx="9" ry="6" opacity="0.95"/>
<ellipse cx="1327" cy="636" rx="6" ry="5" opacity="0.95"/>
<ellipse cx="1213" cy="605" rx="8" ry="5" opacity="0.95"/>
<rect x="1156" y="660" width="8" height="65" opacity="0.55"/>
<rect x="1127" y="660" width="10" height="60" opacity="0.35"/>
<rect x="860" y="650" width="150" height="20" opacity="0.3"/>
<rect x="820" y="600" width="500" height="120" opacity="0.08"/>
<rect x="1240" y="180" width="120" height="110" opacity="0.1"/>
</g>
<path fill="#070707" d="M1000,296 L1157,296 L1157,512 L1000,512 L1000,455 L1010,455 Q1046,455 1046,420 L1046,362 Q1046,328 1010,328 L1000,328Z"/>
<path fill="#080808" d="M1138,268 L1138,184 Q1140,168 1156,168 Q1172,168 1174,184 L1174,240 Q1190,252 1225,252 Q1205,267 1168,270 Z M1102,200 Q1096,225 1077,244 Q1062,256 1046,262 L1010,266 L1010,259 L1029,256 L1029,248 L1049,244 L1068,231 L1083,218 L1080,204Z"/>
<g fill="#fff" filter="url(#gr)">
<path d="M1138,268 L1138,184 Q1140,168 1156,168 Q1172,168 1174,184 L1174,240 Q1190,252 1225,252 Q1205,267 1168,270 Z" opacity="0.6"/>
<path d="M1102,200 Q1096,225 1077,244 Q1062,256 1046,262 L1010,266 L1010,259 L1029,256 L1029,248 L1049,244 L1068,231 L1083,218 L1080,204Z" opacity="0.5"/>
<path d="M1022,303 Q1050,318 1049,352 L1049,430 Q1046,466 1010,471 Q982,480 960,512 L1092,512 L1092,372 Q1090,325 1058,297 L1030,297Z"/>
<rect x="1137" y="296" width="18" height="216"/>
</g>
<g fill="#060606">
<rect x="1092" y="296" width="45" height="216"/>
<path d="M1104,300v208M1114,300v208M1125,300v208M1131,300v208" stroke="#1a1a1a" stroke-dasharray="3 4" stroke-width="1"/>
<rect x="940" y="508" width="340" height="5"/>
</g>
<path d="M1046,350 Q1046,328 1010,326 M1046,350 L1046,425 Q1046,455 1010,457" fill="none" stroke="#060606" stroke-width="3"/>
<path d="M1120,150 Q1114,182 1101,206" fill="none" stroke="#0a0a0a" stroke-width="1.5"/>
<path d="M1259,226 Q1230,275 1169,281" fill="none" stroke="#0a0a0a" stroke-width="1.6"/>
<path fill="#ddd" d="M1100 435h1v1h-1zM1097 436h1v1h-1zM1098 438h1v1h-1zM1096 440h1v1h-1zM1096 442h1v1h-1zM1093 444h1v1h-1zM1094 446h1v1h-1zM1092 447h1v1h-1zM1094 449h1v1h-1zM1092 451h1v1h-1zM1090 453h1v1h-1zM1090 455h1v1h-1zM1091 457h1v1h-1zM1086 459h1v1h-1zM1088 460h1v1h-1zM1085 462h1v1h-1zM1084 464h1v1h-1zM1085 466h1v1h-1zM1082 468h1v1h-1zM1081 470h1v1h-1zM1080 471h1v1h-1zM1080 473h1v1h-1zM1076 475h1v1h-1zM1077 477h1v1h-1zM1075 479h1v1h-1zM1074 481h1v1h-1zM1072 483h1v1h-1zM1070 484h1v1h-1zM1067 486h1v1h-1zM1066 488h1v1h-1zM1065 490h1v1h-1zM1066 492h1v1h-1zM1063 494h1v1h-1zM1061 495h1v1h-1zM1059 497h1v1h-1zM1061 499h1v1h-1zM1059 501h1v1h-1zM1057 503h1v1h-1zM1054 505h1v1h-1zM1052 507h1v1h-1zM1118 358h1v1h-1zM1109 353h1v1h-1zM1127 492h1v1h-1zM1118 306h1v1h-1zM1118 336h1v1h-1zM1128 394h1v1h-1zM1109 349h1v1h-1zM1109 463h1v1h-1zM1109 308h1v1h-1zM1110 425h1v1h-1zM1110 405h1v1h-1zM1127 443h1v1h-1zM1118 365h1v1h-1zM1127 444h1v1h-1zM1128 464h1v1h-1zM1128 425h1v1h-1zM1128 401h1v1h-1zM1110 413h1v1h-1zM1128 416h1v1h-1zM1109 438h1v1h-1zM1127 308h1v1h-1zM1119 320h1v1h-1zM1128 425h1v1h-1zM1118 348h1v1h-1zM1128 459h1v1h-1zM1110 479h1v1h-1zM1127 313h1v1h-1zM1118 461h1v1h-1zM1110 451h1v1h-1zM1119 495h1v1h-1z"/>
<path stroke="#ddd" stroke-width="1" d="M1107.5,478.5h21M1117.5,468.5v21"/>
<path stroke="#aaa" stroke-width="1" fill="none" d="M1106,500h24M1150,482l12,14"/>
<path fill="#060606" opacity="0.85" d="M1163 511h140v1h-140zM1118 511h171v1h-171zM946 513h167v1h-167zM834 517h172v1h-172zM944 518h43v1h-43zM907 517h52v1h-52zM1087 517h96v1h-96zM1214 518h137v1h-137zM813 522h101v1h-101zM1079 523h34v1h-34zM974 522h252v1h-252zM1320 521h118v1h-118zM840 528h163v1h-163zM990 528h90v1h-90zM1020 526h218v1h-218zM1340 531h83v1h-83zM856 531h120v1h-120zM980 532h186v1h-186zM989 531h62v1h-62zM982 531h57v1h-57zM820 535h222v1h-222zM1243 536h193v1h-193zM801 536h88v1h-88zM1037 536h259v1h-259zM1128 535h242v1h-242zM1324 541h53v1h-53zM842 541h176v1h-176zM949 541h130v1h-130zM982 540h210v1h-210zM1083 542h216v1h-216zM786 548h195v1h-195zM1132 546h124v1h-124zM917 546h178v1h-178zM1029 546h239v1h-239zM930 554h125v1h-125zM1277 554h199v1h-199zM904 554h123v1h-123zM985 553h158v1h-158zM801 555h177v1h-177zM1004 553h238v1h-238zM1249 560h238v1h-238zM1089 559h128v1h-128zM992 559h50v1h-50zM990 561h103v1h-103zM773 560h76v1h-76zM1216 559h118v1h-118zM1239 571h92v1h-92zM1375 570h93v1h-93zM1046 570h187v1h-187zM1368 571h51v1h-51zM1031 571h121v1h-121zM1200 570h225v1h-225zM1251 576h37v1h-37zM993 575h252v1h-252zM1325 577h120v1h-120zM1249 575h226v1h-226zM858 582h81v1h-81zM1317 582h55v1h-55zM1181 581h178v1h-178zM782 585h156v1h-156zM1354 587h83v1h-83zM1275 587h194v1h-194z"/>
<path fill="#333" opacity="0.8" d="M1148 532h41v1h-41zM1111 520h13v1h-13zM1009 558h29v1h-29zM1039 560h10v1h-10zM1121 548h57v1h-57zM1011 582h33v1h-33zM1138 531h58v1h-58zM1103 536h11v1h-11zM1019 565h31v1h-31zM1004 565h56v1h-56zM1071 514h26v1h-26zM1195 566h19v1h-19zM1002 571h35v1h-35zM1197 589h25v1h-25zM1182 530h21v1h-21zM1080 535h57v1h-57zM1072 526h21v1h-21zM981 565h57v1h-57zM1251 543h20v1h-20zM959 523h12v1h-12zM1191 543h54v1h-54zM1200 570h59v1h-59zM1240 538h19v1h-19zM1158 571h11v1h-11zM1043 542h28v1h-28zM1032 525h10v1h-10zM974 540h57v1h-57zM1053 589h20v1h-20zM1064 577h51v1h-51zM1054 515h33v1h-33zM1056 585h19v1h-19zM1074 583h11v1h-11zM951 576h48v1h-48zM1240 514h13v1h-13zM1202 532h47v1h-47zM1242 539h23v1h-23zM1167 561h23v1h-23zM941 537h23v1h-23zM1120 572h55v1h-55zM1016 587h11v1h-11zM1209 550h57v1h-57zM1076 542h22v1h-22zM991 551h56v1h-56zM1181 576h46v1h-46zM1038 573h40v1h-40zM1183 537h28v1h-28zM1181 518h19v1h-19zM951 531h13v1h-13zM1247 556h26v1h-26zM1014 582h59v1h-59zM1102 518h14v1h-14zM1012 568h32v1h-32zM1141 545h41v1h-41zM1131 571h52v1h-52zM1024 521h52v1h-52zM1169 557h28v1h-28zM1017 527h22v1h-22zM1105 524h54v1h-54zM1247 538h29v1h-29zM1197 552h21v1h-21z"/>
<path fill="#e8e8e8" opacity="0.9" d="M1239 551h1v1h-1zM826 537h1v1h-1zM1364 547h1v1h-1zM1435 525h1v1h-1zM970 527h1v1h-1zM892 551h1v1h-1zM1187 550h1v1h-1zM1029 548h1v1h-1zM1086 531h1v1h-1zM1333 550h1v1h-1zM829 540h1v1h-1zM1214 530h1v1h-1zM1026 527h1v1h-1zM902 531h1v1h-1zM1199 542h1v1h-1zM902 524h1v1h-1zM995 542h1v1h-1zM888 532h1v1h-1zM902 546h1v1h-1zM1161 525h1v1h-1zM826 535h1v1h-1zM1162 541h1v1h-1zM818 528h1v1h-1zM1271 535h1v1h-1zM962 532h1v1h-1zM1464 532h1v1h-1zM1174 534h1v1h-1zM1062 548h1v1h-1zM1497 534h1v1h-1zM897 544h1v1h-1zM902 524h1v1h-1zM1426 535h1v1h-1zM1365 535h1v1h-1zM1412 536h1v1h-1zM871 524h1v1h-1zM1163 541h1v1h-1zM1432 526h1v1h-1zM1216 534h1v1h-1zM1128 528h1v1h-1zM962 538h1v1h-1zM1444 527h1v1h-1zM1117 546h1v1h-1zM1475 529h1v1h-1zM844 550h1v1h-1zM1481 537h1v1h-1zM790 549h1v1h-1zM1040 549h1v1h-1zM1215 547h1v1h-1zM870 546h1v1h-1zM916 535h1v1h-1zM1384 547h1v1h-1zM887 530h1v1h-1zM1049 538h1v1h-1zM1037 527h1v1h-1zM935 544h1v1h-1zM1422 525h1v1h-1zM1171 545h1v1h-1zM778 547h1v1h-1zM838 540h1v1h-1zM1162 541h1v1h-1zM979 535h1v1h-1zM1186 535h1v1h-1zM1244 536h1v1h-1zM1078 524h1v1h-1zM1214 537h1v1h-1zM926 545h1v1h-1zM1334 536h1v1h-1zM884 537h1v1h-1zM830 527h1v1h-1zM1072 526h1v1h-1zM1081 538h1v1h-1zM780 541h1v1h-1zM811 544h1v1h-1zM1333 538h1v1h-1zM790 538h1v1h-1zM1033 550h1v1h-1zM852 547h1v1h-1zM1497 544h1v1h-1zM1361 529h1v1h-1zM1486 537h1v1h-1zM1467 549h1v1h-1zM873 546h1v1h-1zM1447 525h1v1h-1zM1013 545h1v1h-1zM869 549h1v1h-1zM956 546h1v1h-1zM857 538h1v1h-1zM1439 529h1v1h-1zM947 538h1v1h-1zM989 525h1v1h-1zM886 528h1v1h-1zM1452 543h1v1h-1zM1421 528h1v1h-1zM1338 527h1v1h-1zM1148 541h1v1h-1zM1019 548h1v1h-1zM1166 540h1v1h-1zM1411 526h1v1h-1zM1494 541h1v1h-1zM1045 546h1v1h-1zM948 551h1v1h-1zM1183 534h1v1h-1zM1323 536h1v1h-1zM882 544h1v1h-1zM786 546h1v1h-1zM940 541h1v1h-1zM1488 540h1v1h-1zM1247 532h1v1h-1zM751 524h1v1h-1zM862 541h1v1h-1zM1074 538h1v1h-1zM1421 527h1v1h-1zM920 542h1v1h-1zM766 524h1v1h-1zM1016 526h1v1h-1zM1017 530h1v1h-1zM1187 540h1v1h-1zM903 541h1v1h-1zM1106 527h1v1h-1zM1452 530h1v1h-1zM861 526h1v1h-1zM1228 548h1v1h-1zM1336 535h1v1h-1zM948 524h1v1h-1zM1233 539h1v1h-1zM1012 542h1v1h-1zM1082 550h1v1h-1zM1300 530h1v1h-1zM1427 525h1v1h-1zM1148 535h1v1h-1zM928 525h1v1h-1zM1334 524h1v1h-1zM1163 550h1v1h-1zM856 529h1v1h-1zM1206 538h1v1h-1zM1231 546h1v1h-1zM880 532h1v1h-1zM975 525h1v1h-1zM1417 545h1v1h-1zM1286 524h1v1h-1zM1383 544h1v1h-1zM1098 544h1v1h-1zM1089 530h1v1h-1zM828 530h1v1h-1zM779 533h1v1h-1zM1312 543h1v1h-1zM1384 543h1v1h-1zM949 539h1v1h-1zM1077 546h1v1h-1zM1142 531h1v1h-1zM1231 551h1v1h-1zM912 548h1v1h-1zM761 531h1v1h-1zM927 544h1v1h-1zM1458 544h1v1h-1zM995 548h1v1h-1zM996 530h1v1h-1zM1430 541h1v1h-1zM1269 542h1v1h-1zM1484 537h1v1h-1zM1379 543h1v1h-1zM1393 536h1v1h-1zM1293 539h1v1h-1zM980 529h1v1h-1zM1216 526h1v1h-1zM1433 528h1v1h-1zM770 526h1v1h-1zM1446 533h1v1h-1zM856 524h1v1h-1zM781 543h1v1h-1zM1225 543h1v1h-1zM1302 525h1v1h-1zM1192 534h1v1h-1zM1363 546h1v1h-1zM1418 525h1v1h-1zM1400 549h1v1h-1zM1458 526h1v1h-1zM904 527h1v1h-1zM775 547h1v1h-1zM1359 541h1v1h-1zM1368 541h1v1h-1zM965 526h1v1h-1zM823 545h1v1h-1zM903 532h1v1h-1zM1067 524h1v1h-1zM942 531h1v1h-1zM1286 534h1v1h-1zM990 550h1v1h-1zM1127 547h1v1h-1zM1213 524h1v1h-1zM1059 536h1v1h-1zM1329 533h1v1h-1zM1278 539h1v1h-1zM912 548h1v1h-1zM818 546h1v1h-1zM877 524h1v1h-1zM901 545h1v1h-1zM1483 524h1v1h-1zM1118 537h1v1h-1zM1347 529h1v1h-1zM1120 533h1v1h-1zM1373 531h1v1h-1zM1457 531h1v1h-1zM911 543h1v1h-1zM1123 527h1v1h-1zM1227 526h1v1h-1zM1340 543h1v1h-1zM1340 541h1v1h-1zM1016 535h1v1h-1zM1045 548h1v1h-1zM814 548h1v1h-1zM768 529h1v1h-1zM947 549h1v1h-1zM1125 534h1v1h-1zM1412 530h1v1h-1zM1095 538h1v1h-1zM1315 545h1v1h-1zM1234 533h1v1h-1zM994 528h1v1h-1zM1382 542h1v1h-1zM1306 528h1v1h-1zM1079 545h1v1h-1zM1184 527h1v1h-1zM1096 548h1v1h-1zM928 529h1v1h-1zM976 543h1v1h-1zM1382 528h1v1h-1zM866 530h1v1h-1zM994 538h1v1h-1zM870 533h1v1h-1zM891 551h1v1h-1zM1296 526h1v1h-1zM1471 526h1v1h-1zM1038 551h1v1h-1zM1346 544h1v1h-1zM1076 529h1v1h-1zM1228 526h1v1h-1zM904 534h1v1h-1zM775 535h1v1h-1zM1343 543h1v1h-1zM1125 541h1v1h-1zM1097 527h1v1h-1zM1202 535h1v1h-1zM1305 549h1v1h-1zM1072 540h1v1h-1zM1311 535h1v1h-1zM921 544h1v1h-1zM1410 545h1v1h-1zM1275 547h1v1h-1zM1259 541h1v1h-1zM1090 532h1v1h-1zM1221 526h1v1h-1zM1064 545h1v1h-1zM1284 541h1v1h-1zM937 535h1v1h-1zM1091 541h1v1h-1zM1057 542h1v1h-1zM1447 529h1v1h-1zM1240 545h1v1h-1zM1041 537h1v1h-1z"/>
<path fill="#e8e8e8" opacity="0.9" d="M1482 566h1v1h-1zM1180 569h1v1h-1zM1347 588h1v1h-1zM1163 568h1v1h-1zM1202 578h1v1h-1zM1302 578h1v1h-1zM1247 585h1v1h-1zM1165 575h1v1h-1zM1463 571h1v1h-1zM1279 575h1v1h-1zM1333 568h1v1h-1zM1489 574h1v1h-1zM839 572h1v1h-1zM1079 566h1v1h-1zM1093 576h1v1h-1zM1288 574h1v1h-1zM985 571h1v1h-1zM1319 588h1v1h-1zM1168 571h1v1h-1zM1361 575h1v1h-1zM948 569h1v1h-1zM1343 585h1v1h-1zM1244 577h1v1h-1zM1193 571h1v1h-1zM1474 574h1v1h-1zM1247 585h1v1h-1zM1371 577h1v1h-1zM1006 579h1v1h-1zM887 586h1v1h-1zM1048 586h1v1h-1zM987 575h1v1h-1zM977 576h1v1h-1zM930 566h1v1h-1zM1305 572h1v1h-1zM971 573h1v1h-1zM1135 576h1v1h-1zM1246 581h1v1h-1zM1053 588h1v1h-1zM1398 567h1v1h-1zM1379 587h1v1h-1zM1348 569h1v1h-1zM1381 581h1v1h-1zM810 566h1v1h-1zM1466 581h1v1h-1zM975 568h1v1h-1zM899 571h1v1h-1zM1343 574h1v1h-1zM906 587h1v1h-1zM1354 570h1v1h-1zM1423 580h1v1h-1zM1346 582h1v1h-1zM1425 584h1v1h-1zM1387 570h1v1h-1zM1284 578h1v1h-1zM1319 576h1v1h-1zM1417 579h1v1h-1zM985 571h1v1h-1zM897 577h1v1h-1zM840 577h1v1h-1zM901 577h1v1h-1zM1148 578h1v1h-1zM1404 566h1v1h-1zM1388 577h1v1h-1zM1193 581h1v1h-1zM1388 574h1v1h-1zM1093 589h1v1h-1zM852 581h1v1h-1zM1245 566h1v1h-1zM1226 582h1v1h-1zM1452 573h1v1h-1zM1487 578h1v1h-1zM1139 587h1v1h-1zM823 583h1v1h-1zM1237 574h1v1h-1zM1403 574h1v1h-1zM1132 578h1v1h-1zM1339 571h1v1h-1zM1104 576h1v1h-1zM1187 585h1v1h-1zM1005 585h1v1h-1zM1082 578h1v1h-1zM990 578h1v1h-1zM1482 581h1v1h-1zM1354 573h1v1h-1zM1021 573h1v1h-1zM1210 581h1v1h-1zM1348 566h1v1h-1zM1305 587h1v1h-1zM1181 567h1v1h-1zM1010 566h1v1h-1zM932 588h1v1h-1zM1226 581h1v1h-1zM1352 587h1v1h-1zM1228 580h1v1h-1zM1238 582h1v1h-1zM1217 582h1v1h-1zM948 582h1v1h-1zM1120 584h1v1h-1zM870 570h1v1h-1zM825 584h1v1h-1zM1439 581h1v1h-1zM1058 585h1v1h-1zM1350 579h1v1h-1zM980 573h1v1h-1zM1095 573h1v1h-1zM1101 581h1v1h-1zM1453 567h1v1h-1zM1197 566h1v1h-1zM883 585h1v1h-1zM1202 588h1v1h-1zM1112 566h1v1h-1zM1070 580h1v1h-1zM1456 589h1v1h-1zM1132 575h1v1h-1zM871 581h1v1h-1zM948 569h1v1h-1zM810 566h1v1h-1zM1278 568h1v1h-1zM1476 568h1v1h-1zM1408 569h1v1h-1zM812 583h1v1h-1zM969 583h1v1h-1zM931 567h1v1h-1zM1341 583h1v1h-1zM1398 583h1v1h-1zM859 581h1v1h-1zM1296 577h1v1h-1zM1452 572h1v1h-1zM1475 583h1v1h-1zM807 566h1v1h-1zM1255 585h1v1h-1zM855 573h1v1h-1zM1310 569h1v1h-1zM1402 577h1v1h-1zM841 574h1v1h-1zM1202 576h1v1h-1zM1273 569h1v1h-1zM1358 574h1v1h-1zM1251 581h1v1h-1zM1092 575h1v1h-1zM1350 588h1v1h-1zM1349 579h1v1h-1zM1004 567h1v1h-1zM1481 582h1v1h-1zM1379 573h1v1h-1zM1224 589h1v1h-1zM1381 580h1v1h-1zM1016 576h1v1h-1zM1421 575h1v1h-1zM1279 580h1v1h-1zM1427 585h1v1h-1zM998 566h1v1h-1zM984 576h1v1h-1zM1210 585h1v1h-1zM1421 567h1v1h-1zM1383 585h1v1h-1zM1407 579h1v1h-1zM991 586h1v1h-1zM1364 582h1v1h-1zM1439 574h1v1h-1zM859 579h1v1h-1zM1358 570h1v1h-1zM1325 588h1v1h-1zM963 580h1v1h-1zM1274 577h1v1h-1zM944 572h1v1h-1zM1325 584h1v1h-1zM1121 568h1v1h-1zM1364 584h1v1h-1zM963 579h1v1h-1zM1427 587h1v1h-1zM1165 577h1v1h-1zM1212 570h1v1h-1zM934 570h1v1h-1zM1290 574h1v1h-1zM1195 575h1v1h-1zM1162 569h1v1h-1zM831 589h1v1h-1zM1061 568h1v1h-1zM1242 584h1v1h-1zM909 580h1v1h-1zM1041 578h1v1h-1zM814 566h1v1h-1zM1493 586h1v1h-1zM1140 579h1v1h-1zM983 584h1v1h-1zM1098 588h1v1h-1zM1337 585h1v1h-1zM1474 572h1v1h-1zM826 570h1v1h-1zM926 568h1v1h-1zM835 579h1v1h-1zM1409 576h1v1h-1zM1463 587h1v1h-1zM844 580h1v1h-1zM1078 568h1v1h-1zM1471 572h1v1h-1zM1195 581h1v1h-1zM1469 582h1v1h-1zM1075 576h1v1h-1zM911 589h1v1h-1zM1494 571h1v1h-1zM827 572h1v1h-1zM1046 587h1v1h-1zM1433 586h1v1h-1zM832 584h1v1h-1zM1296 581h1v1h-1zM1489 567h1v1h-1zM901 584h1v1h-1zM1457 582h1v1h-1zM1009 580h1v1h-1zM1330 568h1v1h-1zM1026 572h1v1h-1zM886 577h1v1h-1zM918 571h1v1h-1zM900 582h1v1h-1zM808 583h1v1h-1zM936 566h1v1h-1zM1449 571h1v1h-1zM1453 586h1v1h-1zM1422 569h1v1h-1zM1113 568h1v1h-1zM1450 586h1v1h-1zM1239 576h1v1h-1zM1037 585h1v1h-1zM1134 581h1v1h-1zM899 571h1v1h-1zM839 583h1v1h-1zM1187 569h1v1h-1zM1409 572h1v1h-1zM1088 569h1v1h-1zM989 586h1v1h-1zM1034 570h1v1h-1zM1143 573h1v1h-1zM1432 568h1v1h-1zM1485 567h1v1h-1zM1426 582h1v1h-1zM947 577h1v1h-1zM1000 572h1v1h-1zM941 574h1v1h-1zM1493 589h1v1h-1zM1447 568h1v1h-1zM1002 587h1v1h-1zM840 583h1v1h-1zM1005 589h1v1h-1zM811 585h1v1h-1zM1038 569h1v1h-1zM801 585h1v1h-1zM1168 570h1v1h-1zM1104 587h1v1h-1zM952 579h1v1h-1zM896 570h1v1h-1zM1339 583h1v1h-1zM937 567h1v1h-1zM861 580h1v1h-1zM1146 572h1v1h-1zM944 580h1v1h-1zM1295 585h1v1h-1zM1208 570h1v1h-1zM845 583h1v1h-1z"/>
<path fill="#d5d5d5" opacity="0.9" d="M1086 568h1v1h-1zM977 575h1v1h-1zM1063 577h1v1h-1zM1227 550h1v1h-1zM964 582h1v1h-1zM1107 580h1v1h-1zM1042 526h1v1h-1zM1217 540h1v1h-1zM1010 540h1v1h-1zM1144 512h1v1h-1zM1121 546h1v1h-1zM1119 521h1v1h-1zM1181 575h1v1h-1zM1228 537h1v1h-1zM1180 541h1v1h-1zM1192 516h1v1h-1zM1230 586h1v1h-1zM1113 552h1v1h-1zM1124 553h1v1h-1zM966 587h1v1h-1zM1029 526h1v1h-1zM991 531h1v1h-1zM1213 514h1v1h-1zM989 566h1v1h-1zM1020 513h1v1h-1zM1145 556h1v1h-1zM1122 566h1v1h-1zM991 579h1v1h-1zM1182 515h1v1h-1zM998 550h1v1h-1zM1115 533h1v1h-1zM997 543h1v1h-1zM1002 558h1v1h-1zM1226 523h1v1h-1zM1137 570h1v1h-1zM1010 576h1v1h-1zM1250 542h1v1h-1zM1090 577h1v1h-1zM1122 542h1v1h-1zM1251 572h1v1h-1zM1064 530h1v1h-1zM1063 545h1v1h-1zM1264 574h1v1h-1zM1242 575h1v1h-1zM1222 516h1v1h-1zM1120 586h1v1h-1zM1249 531h1v1h-1zM1090 561h1v1h-1zM1072 553h1v1h-1zM981 545h1v1h-1zM1116 513h1v1h-1zM1003 587h1v1h-1zM1200 585h1v1h-1zM1156 575h1v1h-1zM1234 581h1v1h-1zM970 562h1v1h-1zM1042 564h1v1h-1zM1044 554h1v1h-1zM1246 560h1v1h-1zM1037 552h1v1h-1zM1094 586h1v1h-1zM1049 535h1v1h-1zM1160 521h1v1h-1zM1144 586h1v1h-1zM1119 532h1v1h-1zM1104 553h1v1h-1zM1006 521h1v1h-1zM1000 534h1v1h-1zM1086 534h1v1h-1zM1035 518h1v1h-1zM1129 577h1v1h-1zM1149 556h1v1h-1zM1161 527h1v1h-1zM1180 547h1v1h-1zM1129 559h1v1h-1zM1105 536h1v1h-1zM1035 529h1v1h-1zM1118 541h1v1h-1zM1141 512h1v1h-1zM1069 579h1v1h-1zM1033 555h1v1h-1zM1112 534h1v1h-1zM1266 535h1v1h-1zM1199 524h1v1h-1zM980 579h1v1h-1zM1096 516h1v1h-1zM1080 546h1v1h-1zM1187 520h1v1h-1zM1029 586h1v1h-1zM1188 524h1v1h-1zM1064 539h1v1h-1zM1169 560h1v1h-1zM1223 576h1v1h-1zM1120 569h1v1h-1zM1190 571h1v1h-1zM1107 573h1v1h-1zM1179 583h1v1h-1zM999 579h1v1h-1zM961 571h1v1h-1zM1141 550h1v1h-1zM1258 556h1v1h-1zM1089 573h1v1h-1zM1230 559h1v1h-1zM1077 547h1v1h-1zM1101 568h1v1h-1zM1050 542h1v1h-1zM1132 541h1v1h-1zM1059 573h1v1h-1zM1223 550h1v1h-1zM1097 526h1v1h-1zM1054 523h1v1h-1zM1138 557h1v1h-1zM987 583h1v1h-1zM1060 577h1v1h-1zM1219 586h1v1h-1zM1023 545h1v1h-1zM1242 512h1v1h-1zM974 556h1v1h-1zM1114 583h1v1h-1zM1199 554h1v1h-1zM1269 552h1v1h-1zM1120 565h1v1h-1zM1080 539h1v1h-1zM1144 539h1v1h-1zM1253 564h1v1h-1zM1122 519h1v1h-1zM1076 543h1v1h-1zM1134 556h1v1h-1zM1232 587h1v1h-1zM1110 546h1v1h-1zM1153 589h1v1h-1zM1066 553h1v1h-1zM1212 525h1v1h-1zM1058 588h1v1h-1zM1216 551h1v1h-1zM994 581h1v1h-1zM1173 576h1v1h-1zM1266 581h1v1h-1zM1090 524h1v1h-1zM1049 551h1v1h-1zM1116 526h1v1h-1zM1016 561h1v1h-1zM1146 539h1v1h-1zM1268 561h1v1h-1zM973 544h1v1h-1zM1204 535h1v1h-1zM1174 512h1v1h-1zM1054 577h1v1h-1zM1141 564h1v1h-1zM1020 550h1v1h-1z"/>
<path fill="#e0e0e0" d="M1076 474h1v1h-1zM1073 481h1v1h-1zM1054 506h1v1h-1zM1082 464h1v1h-1zM1096 446h1v1h-1zM1094 442h1v1h-1zM1094 447h1v1h-1zM1064 494h1v1h-1zM1062 493h1v1h-1zM1100 435h1v1h-1zM1089 458h1v1h-1zM1085 460h1v1h-1zM1088 454h1v1h-1zM1060 500h1v1h-1zM1087 460h1v1h-1zM1083 462h1v1h-1zM1060 499h1v1h-1zM1055 504h1v1h-1zM1073 479h1v1h-1zM1100 438h1v1h-1zM1061 496h1v1h-1zM1061 499h1v1h-1zM1090 456h1v1h-1zM1056 504h1v1h-1zM1055 503h1v1h-1zM1087 463h1v1h-1zM1091 450h1v1h-1zM1061 498h1v1h-1zM1064 492h1v1h-1zM1093 447h1v1h-1zM1096 448h1v1h-1zM1090 455h1v1h-1zM1096 443h1v1h-1zM1085 462h1v1h-1zM1095 439h1v1h-1zM1063 494h1v1h-1zM1089 452h1v1h-1zM1088 455h1v1h-1zM1099 437h1v1h-1zM1085 459h1v1h-1zM1067 485h1v1h-1zM1092 454h1v1h-1zM1095 444h1v1h-1zM1065 495h1v1h-1zM1093 446h1v1h-1zM1068 487h1v1h-1zM1054 504h1v1h-1zM1056 503h1v1h-1zM1092 451h1v1h-1zM1097 444h1v1h-1zM1093 453h1v1h-1zM1075 477h1v1h-1zM1092 452h1v1h-1zM1095 450h1v1h-1zM1096 443h1v1h-1zM1077 474h1v1h-1zM1066 490h1v1h-1zM1073 482h1v1h-1zM1088 457h1v1h-1zM1095 441h1v1h-1zM1061 496h1v1h-1zM1070 482h1v1h-1zM1076 475h1v1h-1zM1079 471h1v1h-1zM1096 439h1v1h-1zM1090 451h1v1h-1zM1068 486h1v1h-1zM1087 464h1v1h-1zM1068 490h1v1h-1zM1059 497h1v1h-1z"/>
<g fill="none" stroke="#0c0c0c" stroke-width="1.3">
<path d="M865,587.5 L1295,587.5" stroke-width="1"/>
<path d="M995,615 L1245,615" stroke-width="2"/>
<path d="M915,680 L932,665 L1002,667 L1057,725 L1057,742"/>
<path d="M1107,617 Q1130,585 1170,588 M1125,617 Q1120,640 1125,660 L1125,725 M1130,612 Q1160,595 1245,598 Q1250,612 1245,615" stroke="#151515"/>
<path d="M1271,642 L1271,612 Q1275,599 1290,599 L1354,599" stroke="#151515"/>
<path d="M1271,779 L1280,720 1300,690 1300,668 1329,668" stroke="#141414" stroke-dasharray="6 3"/>
<path d="M1140,807 L1255,801" stroke="#202020"/>
<path d="M1050,812 L1077,778" stroke="#1a1a1a"/>
<path d="M1195,670 L1195,780 M1195,704 L1240,704 M1195,752 L1230,752" stroke="#121212" stroke-dasharray="4 3"/>
</g>
<path fill="#e8e8e8" d="M1106 672h1v1h-1zM1114 752h1v1h-1zM1110 687h1v1h-1zM1114 748h1v1h-1zM1114 666h1v1h-1zM1112 687h1v1h-1zM1106 653h1v1h-1zM1115 799h1v1h-1zM1110 759h1v1h-1zM1105 624h1v1h-1zM1108 656h1v1h-1zM1107 693h1v1h-1zM1112 679h1v1h-1zM1114 652h1v1h-1zM1114 731h1v1h-1zM1110 667h1v1h-1zM1112 753h1v1h-1zM1114 617h1v1h-1zM1112 772h1v1h-1zM1114 625h1v1h-1zM1109 738h1v1h-1zM1107 665h1v1h-1zM1112 775h1v1h-1zM1115 799h1v1h-1zM1112 634h1v1h-1zM1114 695h1v1h-1zM1113 782h1v1h-1zM1115 634h1v1h-1zM1115 701h1v1h-1zM1114 755h1v1h-1zM1114 782h1v1h-1zM1108 707h1v1h-1zM1113 756h1v1h-1zM1115 719h1v1h-1zM1113 642h1v1h-1zM1112 625h1v1h-1zM1112 778h1v1h-1zM1116 726h1v1h-1zM1113 744h1v1h-1zM1106 666h1v1h-1zM1110 688h1v1h-1zM1108 657h1v1h-1zM1113 644h1v1h-1zM1111 751h1v1h-1zM1111 665h1v1h-1zM1115 706h1v1h-1zM1109 687h1v1h-1zM1112 793h1v1h-1zM1111 729h1v1h-1zM1114 780h1v1h-1zM1112 769h1v1h-1zM1113 750h1v1h-1zM1114 709h1v1h-1zM1112 783h1v1h-1zM1110 674h1v1h-1zM1106 658h1v1h-1zM1108 673h1v1h-1zM1113 757h1v1h-1zM1108 639h1v1h-1zM1111 710h1v1h-1zM1105 650h1v1h-1zM1116 619h1v1h-1zM1111 767h1v1h-1zM1116 760h1v1h-1zM1109 729h1v1h-1zM1111 714h1v1h-1zM1111 654h1v1h-1zM1115 618h1v1h-1zM1114 745h1v1h-1zM1115 804h1v1h-1zM1108 667h1v1h-1zM1105 644h1v1h-1zM1115 771h1v1h-1zM1108 676h1v1h-1zM1115 744h1v1h-1zM1113 802h1v1h-1zM1115 773h1v1h-1zM1112 765h1v1h-1zM1114 653h1v1h-1zM1110 681h1v1h-1zM1111 727h1v1h-1zM1112 783h1v1h-1zM1111 625h1v1h-1zM1115 742h1v1h-1zM1115 758h1v1h-1zM1114 805h1v1h-1zM1109 716h1v1h-1zM1112 676h1v1h-1zM1112 633h1v1h-1zM1110 649h1v1h-1zM1113 810h1v1h-1zM1109 624h1v1h-1zM1113 655h1v1h-1zM1114 617h1v1h-1zM1115 788h1v1h-1zM1110 702h1v1h-1zM1113 749h1v1h-1zM1110 701h1v1h-1zM1113 704h1v1h-1zM1116 782h1v1h-1zM1108 649h1v1h-1zM1112 705h1v1h-1zM1108 686h1v1h-1zM1108 634h1v1h-1zM1116 709h1v1h-1zM1115 798h1v1h-1zM1116 811h1v1h-1zM1115 740h1v1h-1zM1112 629h1v1h-1zM1111 738h1v1h-1zM1116 731h1v1h-1zM1113 713h1v1h-1zM1109 676h1v1h-1zM1112 794h1v1h-1zM1112 654h1v1h-1zM1108 706h1v1h-1zM1112 749h1v1h-1zM1112 733h1v1h-1zM1113 722h1v1h-1zM1108 696h1v1h-1zM1115 653h1v1h-1zM1109 726h1v1h-1zM1113 789h1v1h-1zM1110 635h1v1h-1zM1111 667h1v1h-1zM1110 727h1v1h-1zM1110 731h1v1h-1zM1113 719h1v1h-1zM1109 633h1v1h-1zM1109 631h1v1h-1zM1114 789h1v1h-1zM1115 759h1v1h-1zM1116 639h1v1h-1zM1111 761h1v1h-1zM1113 783h1v1h-1zM1116 651h1v1h-1zM1114 729h1v1h-1zM1113 644h1v1h-1zM1107 628h1v1h-1zM1107 691h1v1h-1zM1110 735h1v1h-1zM1113 676h1v1h-1zM1115 702h1v1h-1zM1115 741h1v1h-1zM1115 729h1v1h-1zM1112 791h1v1h-1zM1112 766h1v1h-1zM1114 769h1v1h-1zM1112 782h1v1h-1zM1114 691h1v1h-1zM1115 806h1v1h-1zM1111 625h1v1h-1zM1111 636h1v1h-1zM1112 777h1v1h-1zM1115 802h1v1h-1zM1108 667h1v1h-1zM1115 706h1v1h-1zM1110 733h1v1h-1zM1105 621h1v1h-1zM1112 777h1v1h-1zM1111 727h1v1h-1zM1112 754h1v1h-1zM1115 645h1v1h-1zM1114 724h1v1h-1zM1116 778h1v1h-1zM1108 619h1v1h-1zM1110 647h1v1h-1zM1115 791h1v1h-1zM1106 624h1v1h-1zM1114 780h1v1h-1z"/>
<path fill="#cfcfcf" opacity="0.6" d="M1115 704h1v1h-1zM974 785h1v1h-1zM1116 792h1v1h-1zM1246 616h1v1h-1zM1077 647h1v1h-1zM1416 729h1v1h-1zM906 637h1v1h-1zM1096 702h1v1h-1zM1226 685h1v1h-1zM1092 601h1v1h-1zM1227 673h1v1h-1zM892 701h1v1h-1zM1471 609h1v1h-1zM967 747h1v1h-1zM1043 660h1v1h-1zM1180 657h1v1h-1zM1221 716h1v1h-1zM1454 818h1v1h-1zM900 723h1v1h-1zM1342 791h1v1h-1zM1344 739h1v1h-1zM1260 679h1v1h-1zM1048 774h1v1h-1zM1403 806h1v1h-1zM1288 666h1v1h-1zM1337 762h1v1h-1zM1185 739h1v1h-1zM1090 721h1v1h-1zM1123 613h1v1h-1zM1082 671h1v1h-1zM1473 705h1v1h-1zM1100 653h1v1h-1zM1020 676h1v1h-1zM961 601h1v1h-1zM1402 699h1v1h-1zM1147 725h1v1h-1zM1061 637h1v1h-1zM919 666h1v1h-1zM1065 759h1v1h-1zM1210 806h1v1h-1zM1084 802h1v1h-1zM1230 617h1v1h-1zM987 727h1v1h-1zM1472 678h1v1h-1zM1344 694h1v1h-1zM1400 614h1v1h-1zM1170 797h1v1h-1zM1045 656h1v1h-1zM893 636h1v1h-1zM1040 754h1v1h-1z"/>
<path fill="#151515" opacity="0.7" d="M924 699h1v1h-1zM916 740h1v1h-1zM1234 749h1v1h-1zM914 766h1v1h-1zM1282 740h1v1h-1zM858 781h1v1h-1zM1240 688h1v1h-1zM885 657h1v1h-1zM1077 795h1v1h-1zM1127 804h1v1h-1zM921 685h1v1h-1zM1179 749h1v1h-1zM1014 755h1v1h-1zM982 631h1v1h-1zM1018 629h1v1h-1zM1120 686h1v1h-1zM1057 739h1v1h-1zM943 712h1v1h-1zM826 805h1v1h-1zM1090 817h1v1h-1zM846 742h1v1h-1zM1167 685h1v1h-1zM864 651h1v1h-1zM888 773h1v1h-1zM863 782h1v1h-1zM1023 727h1v1h-1zM1102 730h1v1h-1zM1135 740h1v1h-1zM978 768h1v1h-1zM943 762h1v1h-1zM1186 775h1v1h-1zM968 774h1v1h-1zM1289 710h1v1h-1zM953 724h1v1h-1zM1271 646h1v1h-1zM824 715h1v1h-1zM1134 774h1v1h-1zM993 817h1v1h-1zM929 771h1v1h-1zM863 625h1v1h-1zM884 632h1v1h-1zM1060 731h1v1h-1zM907 807h1v1h-1zM995 649h1v1h-1zM905 767h1v1h-1zM1262 652h1v1h-1zM833 775h1v1h-1zM936 816h1v1h-1zM1059 747h1v1h-1zM985 780h1v1h-1zM1040 684h1v1h-1zM1253 641h1v1h-1zM1172 633h1v1h-1zM1129 700h1v1h-1zM1234 631h1v1h-1zM1090 701h1v1h-1zM1261 808h1v1h-1zM1121 664h1v1h-1zM940 672h1v1h-1zM1028 666h1v1h-1zM917 771h1v1h-1zM1128 679h1v1h-1zM1297 663h1v1h-1zM1093 651h1v1h-1zM1234 793h1v1h-1zM948 770h1v1h-1zM1214 676h1v1h-1zM979 717h1v1h-1zM1247 652h1v1h-1zM1147 739h1v1h-1zM1037 735h1v1h-1zM1243 661h1v1h-1zM1244 692h1v1h-1zM1194 792h1v1h-1zM907 792h1v1h-1zM1297 679h1v1h-1zM831 642h1v1h-1zM1287 621h1v1h-1zM1257 650h1v1h-1zM1173 639h1v1h-1zM900 756h1v1h-1zM863 687h1v1h-1zM1260 763h1v1h-1zM1243 815h1v1h-1zM835 666h1v1h-1zM1200 757h1v1h-1zM838 720h1v1h-1zM931 706h1v1h-1zM870 623h1v1h-1zM1295 683h1v1h-1zM1241 644h1v1h-1zM1053 647h1v1h-1zM1025 655h1v1h-1zM1148 649h1v1h-1zM1174 720h1v1h-1zM873 690h1v1h-1zM1058 803h1v1h-1zM987 663h1v1h-1zM1284 796h1v1h-1zM1171 674h1v1h-1zM905 672h1v1h-1zM853 628h1v1h-1zM1064 701h1v1h-1zM1087 692h1v1h-1zM825 757h1v1h-1zM1133 728h1v1h-1zM1083 758h1v1h-1zM1291 794h1v1h-1zM1164 699h1v1h-1zM972 703h1v1h-1zM1287 697h1v1h-1zM1004 701h1v1h-1zM888 819h1v1h-1zM822 741h1v1h-1zM1264 670h1v1h-1zM1113 695h1v1h-1zM935 659h1v1h-1zM875 788h1v1h-1zM1196 801h1v1h-1zM843 758h1v1h-1zM975 749h1v1h-1zM1083 683h1v1h-1zM1286 620h1v1h-1zM1178 790h1v1h-1zM1064 738h1v1h-1zM1297 666h1v1h-1zM1122 768h1v1h-1zM1001 762h1v1h-1zM1008 725h1v1h-1zM1114 755h1v1h-1zM974 745h1v1h-1zM1080 664h1v1h-1zM1114 672h1v1h-1zM1256 714h1v1h-1zM1166 724h1v1h-1zM1048 664h1v1h-1zM888 805h1v1h-1zM1073 724h1v1h-1zM1073 782h1v1h-1zM934 654h1v1h-1zM1214 712h1v1h-1zM1127 785h1v1h-1zM1249 793h1v1h-1zM840 696h1v1h-1zM1219 783h1v1h-1zM879 650h1v1h-1zM940 640h1v1h-1zM991 780h1v1h-1zM1070 710h1v1h-1zM862 699h1v1h-1z"/>
<g fill="none" stroke="#070707" stroke-linecap="round" stroke-linejoin="round">
<path d="M1298,180 L1296,200 1295,218" stroke-width="3.5"/>
<path d="M1300,186 L1308,196" stroke-width="5"/>
<path d="M1317,191 L1335,199" stroke-width="3.5"/>
<path d="M1316,212 L1311,229" stroke-width="3"/>
<path d="M1301,210 L1304,236" stroke-width="1.5" stroke-dasharray="3 2"/>
<path d="M1265,225 L1266,240 L1272,247 L1276,256 L1273,266 L1284,270 L1288,266" stroke-width="3"/>
<path d="M1291,262 L1311,255" stroke-width="2.5"/>
<path d="M1251,250 L1260,230" stroke-width="1.5"/>
<path d="M1326,226 L1329,233" stroke-width="3.5"/>
<path d="M1343,233 L1344,240 M1339,247 L1346,258" stroke-width="4"/>
<path d="M1339,260 L1350,278" stroke-width="1.5" stroke-dasharray="3 2"/>
</g>
<g fill="none" stroke="#0a0a0a" stroke-width="2">
<path d="M1255,350 L1258,400 M1255,372 L1268,372 M1255,396 L1268,396"/>
<path d="M1286,368 L1333,368 M1288,368 Q1285,352 1292,350" stroke-width="1.5"/>
<path d="M1293,461 L1291,405 1317,405 M1317,405 L1315,460" stroke-width="1.5"/>
<path d="M1250,329 L1300,329" stroke-width="1"/>
<path d="M1441,413 L1441,426 1457,426" stroke-width="1.5"/>
</g>
<path fill="#090909" opacity="0.9" d="M1359 256h2v2h-2zM1321 260h1v1h-1zM1334 196h1v1h-1zM1293 237h1v1h-1zM1320 237h2v2h-2zM1281 241h1v1h-1zM1314 186h1v1h-1zM1287 239h2v2h-2zM1281 209h2v2h-2zM1264 249h1v1h-1zM1276 226h2v2h-2zM1319 220h1v1h-1zM1330 221h1v1h-1zM1329 212h2v2h-2zM1300 246h2v2h-2zM1291 222h1v1h-1zM1352 201h2v2h-2zM1261 202h1v1h-1zM1263 229h2v2h-2zM1310 234h1v1h-1zM1266 241h2v2h-2zM1328 227h2v2h-2zM1273 187h2v2h-2zM1306 236h1v1h-1zM1325 261h2v2h-2zM1311 281h2v2h-2zM1313 264h2v2h-2zM1267 204h1v1h-1zM1314 181h2v2h-2zM1264 262h2v2h-2zM1260 254h2v2h-2zM1305 186h2v2h-2zM1343 195h2v2h-2zM1340 275h1v1h-1zM1288 200h1v1h-1zM1274 239h2v2h-2zM1264 222h2v2h-2zM1313 236h2v2h-2zM1326 213h1v1h-1zM1346 268h2v2h-2z"/>
<path fill="#e8e8e8" opacity="0.9" d="M1319 339h1v1h-1zM1293 417h1v1h-1zM1482 418h1v1h-1zM1424 341h1v1h-1zM1481 371h1v1h-1zM1358 426h1v1h-1zM1412 429h1v1h-1zM1242 330h1v1h-1zM1487 443h1v1h-1zM1249 352h1v1h-1zM1354 350h1v1h-1zM1294 465h1v1h-1z"/>
<path fill="#0a0a0a" opacity="0.8" d="M1398 369h1v1h-1zM1429 334h1v1h-1zM1292 330h1v1h-1zM1463 321h1v1h-1zM1275 449h1v1h-1zM1451 384h1v1h-1zM1243 422h1v1h-1zM1431 327h1v1h-1zM1297 422h1v1h-1zM1434 436h1v1h-1zM1378 327h1v1h-1zM1442 421h1v1h-1zM1374 379h1v1h-1zM1292 315h1v1h-1zM1253 338h1v1h-1zM1456 420h1v1h-1zM1355 372h1v1h-1zM1465 457h1v1h-1zM1274 327h1v1h-1zM1356 428h1v1h-1zM1467 435h1v1h-1zM1423 422h1v1h-1zM1320 343h1v1h-1zM1382 336h1v1h-1zM1485 413h1v1h-1zM1300 465h1v1h-1zM1325 326h1v1h-1zM1315 411h1v1h-1zM1420 333h1v1h-1zM1278 331h1v1h-1zM1326 368h1v1h-1zM1250 359h1v1h-1zM1410 335h1v1h-1zM1410 389h1v1h-1zM1258 383h1v1h-1zM1244 432h1v1h-1zM1471 455h1v1h-1zM1292 347h1v1h-1zM1318 399h1v1h-1zM1436 334h1v1h-1zM1362 430h1v1h-1zM1438 453h1v1h-1zM1390 350h1v1h-1zM1390 317h1v1h-1zM1240 333h1v1h-1zM1279 351h1v1h-1zM1284 359h1v1h-1zM1365 356h1v1h-1zM1334 318h1v1h-1zM1456 437h1v1h-1zM1428 377h1v1h-1zM1434 319h1v1h-1zM1281 366h1v1h-1zM1249 306h1v1h-1zM1390 370h1v1h-1zM1421 370h1v1h-1zM1457 312h1v1h-1zM1429 424h1v1h-1zM1333 412h1v1h-1zM1263 300h1v1h-1zM1407 442h1v1h-1zM1318 344h1v1h-1zM1267 340h1v1h-1zM1279 345h1v1h-1zM1380 355h1v1h-1zM1303 396h1v1h-1zM1250 343h1v1h-1zM1486 348h1v1h-1zM1384 467h1v1h-1zM1476 423h1v1h-1zM1379 340h1v1h-1zM1264 317h1v1h-1zM1253 434h1v1h-1zM1422 335h1v1h-1zM1433 314h1v1h-1zM1284 442h1v1h-1zM1499 372h1v1h-1zM1402 318h1v1h-1zM1388 320h1v1h-1zM1412 336h1v1h-1zM1303 431h1v1h-1zM1373 439h1v1h-1zM1453 312h1v1h-1zM1327 316h1v1h-1zM1295 431h1v1h-1zM1285 351h1v1h-1zM1261 429h1v1h-1zM1393 331h1v1h-1zM1322 458h1v1h-1zM1444 305h1v1h-1zM1445 325h1v1h-1zM1372 328h1v1h-1zM1447 430h1v1h-1zM1292 457h1v1h-1zM1418 420h1v1h-1zM1257 300h1v1h-1zM1468 306h1v1h-1zM1376 356h1v1h-1zM1257 402h1v1h-1zM1256 447h1v1h-1zM1253 362h1v1h-1zM1346 410h1v1h-1zM1492 399h1v1h-1zM1448 383h1v1h-1zM1440 384h1v1h-1zM1307 417h1v1h-1zM1318 308h1v1h-1zM1361 434h1v1h-1zM1416 328h1v1h-1zM1340 408h1v1h-1zM1483 387h1v1h-1zM1434 400h1v1h-1zM1410 407h1v1h-1zM1257 433h1v1h-1zM1448 427h1v1h-1zM1460 340h1v1h-1zM1392 395h1v1h-1zM1468 397h1v1h-1zM1482 451h1v1h-1zM1253 412h1v1h-1z"/>
</svg>
<svg class="a" style="left:0;top:0" width="60" height="60" viewBox="379 78 60 60"><circle cx="401" cy="86.5" r="2.1" fill="#8a7e7e"/><circle cx="408" cy="89" r="2.1" fill="#6e6262"/><circle cx="413" cy="94" r="2.1" fill="#5a4e4e"/><circle cx="414" cy="100.5" r="2.1" fill="#3a3030"/><circle cx="412.5" cy="107" r="2.1" fill="#201818"/><circle cx="407.5" cy="112" r="2.1" fill="#000"/><circle cx="401" cy="113.5" r="2.1" fill="#fff"/><circle cx="394.5" cy="112" r="2.1" fill="#e8e8e8"/><circle cx="390" cy="107" r="2.1" fill="#d8d0d0"/><circle cx="388" cy="100.5" r="2.1" fill="#c0b8b8"/><circle cx="390" cy="94" r="2.1" fill="#b0a4a4"/><circle cx="394.5" cy="89" r="2.1" fill="#9a8e8e"/></svg>
<svg class="a" style="left:0;top:0" width="1478" height="801" viewBox="379 78 1478 801"><path d="M1447.5 832v10M1764.5 832v10M1447 837.5h318" stroke="#fff" stroke-width="1"/><text x="1606" y="861" text-anchor="middle" font-family="Liberation Sans" font-size="13" fill="#fff">150</text><path d="M1811 838 L1831 824" stroke="#00e000" stroke-width="3"/><path d="M1811 838 L1826 858" stroke="#e00000" stroke-width="3"/><text x="1833" y="821" font-family="Liberation Sans" font-size="11" fill="#00e000">Y</text><text x="1805" y="842" font-family="Liberation Sans" font-size="11" fill="#20a0ff">Z</text><text x="1821" y="866" font-family="Liberation Sans" font-size="11" fill="#e00000">X</text></svg>

</div>
</body></html>
